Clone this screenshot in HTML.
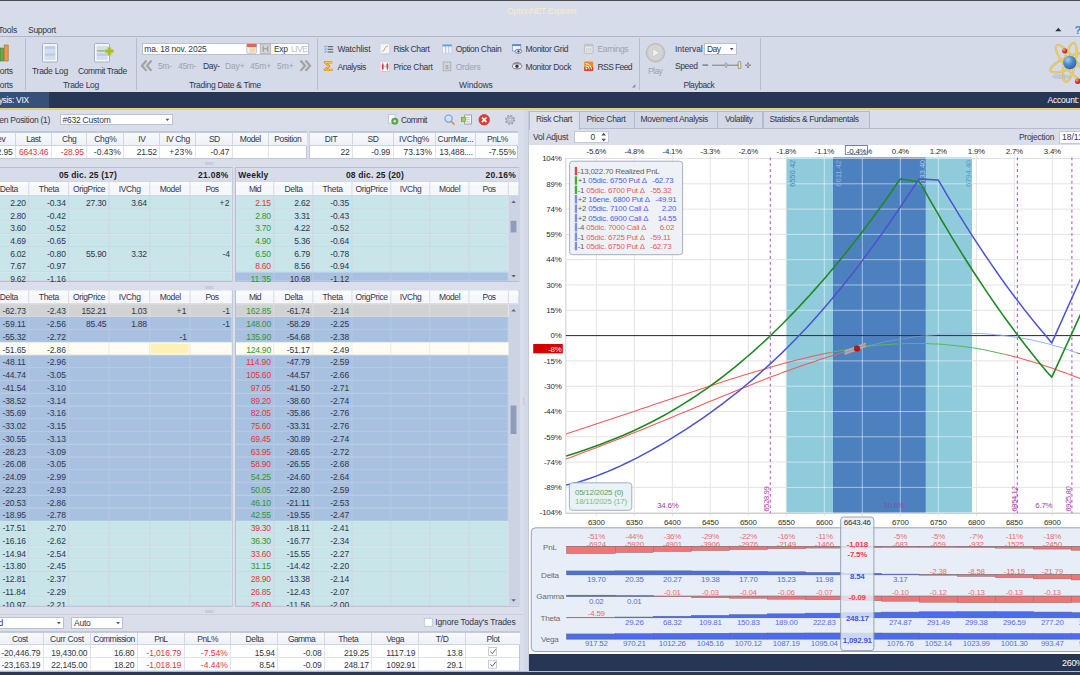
<!DOCTYPE html>
<html><head><meta charset="utf-8"><title>OptionNET Explorer</title>
<style>
html,body{margin:0;padding:0;}
body{width:1080px;height:675px;overflow:hidden;position:relative;background:#d6dbe9;font-family:"Liberation Sans",sans-serif;}
.r{position:absolute;box-sizing:border-box;}
.t{position:absolute;white-space:nowrap;font-size:8.5px;line-height:12px;letter-spacing:-0.2px;color:#323649;}
.g{color:#9aa3b5;}
.w{color:#fff;}
.red{color:#e4343f;}
.grn{color:#30962f;}
.b{font-weight:bold;color:#1d1d28;}
svg{position:absolute;left:0;top:0;}
svg text{font-family:"Liberation Sans",sans-serif;letter-spacing:-0.22px;}
</style></head><body>

<div class="r" style="left:0.00px;top:0.00px;width:1080.00px;height:1.00px;background:#4e4e52;"></div>
<div class="r" style="left:0.00px;top:1.00px;width:1080.00px;height:35.50px;background:#d7dcea;"></div>
<div class="t " style="top:5.00px;letter-spacing:-0.342px;left:507.00px;color:#f6ead2;">OptionNET Explorer</div>
<div class="t " style="top:24.00px;letter-spacing:-0.219px;left:-1.80px;">Tools</div>
<div class="t " style="top:24.00px;letter-spacing:-0.289px;left:28.00px;">Support</div>
<svg width="1080" height="40" viewBox="0 0 1080 40"><path d="M1055.3 31.2 L1058.3 27.8 L1061.3 31.2Z" fill="#26304a"/><text x="1074.5" y="33.5" font-size="11" font-weight="bold" fill="#3b8fd8">?</text></svg>
<div class="r" style="left:0.00px;top:36.00px;width:1080.00px;height:1.00px;background:#aeb6c8;"></div>
<div class="r" style="left:0.00px;top:37.00px;width:1080.00px;height:54.70px;background:#d5dae8;"></div>
<div class="r" style="left:25.00px;top:38.00px;width:1.00px;height:52.00px;background:#b4bccd;"></div>
<div class="r" style="left:136.00px;top:38.00px;width:1.00px;height:52.00px;background:#b4bccd;"></div>
<div class="r" style="left:317.00px;top:38.00px;width:1.00px;height:52.00px;background:#b4bccd;"></div>
<div class="r" style="left:639.00px;top:38.00px;width:1.00px;height:52.00px;background:#b4bccd;"></div>
<div class="r" style="left:760.00px;top:38.00px;width:1.00px;height:52.00px;background:#b4bccd;"></div>
<div class="t " style="top:64.80px;letter-spacing:-0.288px;left:-15.00px;">Reports</div>
<div class="t " style="top:78.70px;letter-spacing:-0.288px;left:-15.00px;">Reports</div>
<div class="t " style="top:64.80px;letter-spacing:-0.270px;left:32.00px;">Trade Log</div>
<div class="t " style="top:64.80px;letter-spacing:-0.386px;left:78.00px;">Commit Trade</div>
<div class="t " style="top:78.70px;letter-spacing:-0.270px;left:63.00px;">Trade Log</div>
<div class="r" style="left:142.20px;top:42.60px;width:167.20px;height:12.80px;background:#fff;border:1px solid #b9c1d2;"></div>
<div class="t " style="top:43.00px;letter-spacing:-0.175px;left:144.30px;">ma. 18 nov. 2025</div>
<div class="t " style="top:43.00px;letter-spacing:-0.382px;left:274.00px;">Exp</div>
<div class="t g" style="top:43.00px;letter-spacing:-0.600px;left:291.00px;color:#b9c1cf;">LIVE</div>
<div class="t g" style="top:60.00px;letter-spacing:-0.380px;left:158.00px;">5m-</div>
<div class="t g" style="top:60.00px;letter-spacing:-0.342px;left:178.00px;">45m-</div>
<div class="t " style="top:60.00px;letter-spacing:-0.362px;left:203.00px;">Day-</div>
<div class="t g" style="top:60.00px;letter-spacing:-0.145px;left:225.00px;">Day+</div>
<div class="t g" style="top:60.00px;letter-spacing:-0.125px;left:250.00px;">45m+</div>
<div class="t g" style="top:60.00px;letter-spacing:-0.091px;left:277.00px;">5m+</div>
<div class="t " style="top:78.70px;letter-spacing:-0.297px;left:189.00px;">Trading Date &amp; Time</div>
<div class="t " style="top:43.00px;letter-spacing:-0.129px;left:337.40px;">Watchlist</div>
<div class="t " style="top:60.50px;letter-spacing:-0.394px;left:337.40px;">Analysis</div>
<div class="t " style="top:43.00px;letter-spacing:-0.367px;left:393.50px;">Risk Chart</div>
<div class="t " style="top:60.50px;letter-spacing:-0.319px;left:393.50px;">Price Chart</div>
<div class="t " style="top:43.00px;letter-spacing:-0.322px;left:455.70px;">Option Chain</div>
<div class="t g" style="top:60.50px;letter-spacing:-0.205px;left:455.70px;">Orders</div>
<div class="t " style="top:43.00px;letter-spacing:-0.334px;left:525.50px;">Monitor Grid</div>
<div class="t " style="top:60.50px;letter-spacing:-0.360px;left:525.50px;">Monitor Dock</div>
<div class="t g" style="top:43.00px;letter-spacing:-0.350px;left:597.50px;">Earnings</div>
<div class="t " style="top:60.50px;letter-spacing:-0.589px;left:597.50px;">RSS Feed</div>
<div class="t " style="top:78.70px;letter-spacing:-0.105px;left:459.00px;">Windows</div>
<div class="t g" style="top:64.50px;letter-spacing:-0.571px;left:648.00px;">Play</div>
<div class="t " style="top:43.00px;letter-spacing:-0.016px;left:675.00px;">Interval</div>
<div class="t " style="top:59.50px;letter-spacing:-0.416px;left:675.00px;">Speed</div>
<div class="t " style="top:78.70px;letter-spacing:-0.468px;left:683.50px;">Playback</div>
<div class="r" style="left:704.00px;top:42.60px;width:33.20px;height:12.90px;background:#fff;border:1px solid #b9c1d2;"></div>
<div class="t " style="top:43.00px;letter-spacing:-0.539px;left:707.00px;">Day</div>
<svg width="1080" height="92" viewBox="0 0 1080 92">
<!-- reports icon (cut) -->
<rect x="0" y="48" width="3.5" height="13" fill="#6aa84f" stroke="#3f7a2c" stroke-width=".6"/>
<rect x="4.2" y="45" width="4" height="16" fill="#e79a4a" stroke="#b06a22" stroke-width=".6"/>
<!-- trade log -->
<rect x="42.5" y="43.5" width="15" height="18.5" rx="1.2" fill="#f4f7fc" stroke="#9fb1cf" stroke-width="1"/><rect x="44.6" y="45.8" width="10.8" height="14" fill="#d3ddf0"/>
<rect x="44.8" y="46.5" width="10.4" height="2.3" fill="#bccbe5"/><rect x="44.8" y="50" width="10.4" height="2.3" fill="#d3ddf0"/>
<rect x="44.8" y="53.5" width="10.4" height="2.3" fill="#bccbe5"/><rect x="44.8" y="57" width="10.4" height="2.3" fill="#d3ddf0"/>
<!-- commit trade -->
<rect x="94.5" y="43.5" width="15" height="18.5" rx="1.2" fill="#f4f7fc" stroke="#9fb1cf" stroke-width="1"/><rect x="96.6" y="45.8" width="10.8" height="14" fill="#d9e2f2"/>
<rect x="96.8" y="47" width="10.4" height="2.3" fill="#d3ddf0"/><rect x="96.8" y="50.3" width="14" height="1.2" fill="#8fb04a"/>
<rect x="96.8" y="53.5" width="10.4" height="2.3" fill="#bccbe5"/><rect x="96.8" y="57" width="10.4" height="2.3" fill="#d3ddf0"/>
<path d="M107.8 47.2h3v2.6h2.7v2.9h-2.7v2.7h-3v-2.7h-2.6v-2.9h2.6z" fill="#8fc040" stroke="#e3c43a" stroke-width=".9"/>
<!-- date row -->
<rect x="246.8" y="44" width="9.8" height="9.4" rx="1" fill="#e9eef8" stroke="#a9b8d4" stroke-width=".7"/>
<rect x="246.8" y="44" width="9.8" height="3" fill="#e0665c"/>
<rect x="249.5" y="48.3" width="6" height="4" fill="#f3d9a0"/>
<rect x="260.2" y="44" width="10.6" height="9.6" fill="#d4d4d2" stroke="#a5a7a6" stroke-width=".7"/>
<path d="M263.2 45.8v6M267.8 45.8v6M263.2 48.8h4.6" stroke="#8b8d8c" stroke-width=".9" fill="none"/>
<path d="M146.5 60.5l-4.5 5.2 4.5 5.2M151.5 60.5l-4.5 5.2 4.5 5.2" stroke="#a3a3a1" stroke-width="2.2" fill="none"/>
<path d="M300.5 60.5l4.5 5.2-4.5 5.2M305.5 60.5l4.5 5.2-4.5 5.2" stroke="#a3a3a1" stroke-width="2.2" fill="none"/>
<!-- watchlist -->
<path d="M327.6 46.7h5.6M327.6 49.3h5.6M327.6 52h5.6" stroke="#3f4458" stroke-width=".9"/>
<path d="M324.4 46.3l.8.9 1.200-1.700M324.4 48.900l.8.9 1.200-1.700M324.4 51.600l.8.9 1.200-1.700" stroke="#4f86d6" stroke-width=".8" fill="none"/>
<!-- analysis sigma -->
<path d="M332.3 62.4h-7.3l4 3.700-4.2 3.800h7.800" stroke="#e28a22" stroke-width="2.300" fill="none" stroke-linejoin="round"/><path d="M332.3 62.400h-7.300l4 3.700-4.200 3.800h7.800" stroke="#f7d65a" stroke-width=".9" fill="none" stroke-linejoin="round"/>
<!-- risk chart -->
<rect x="381" y="44.700" width="9.200" height="9.600" rx="1" fill="#b4c0d8"/><rect x="380.3" y="44" width="9.2" height="9.6" rx=".8" fill="#f6f7f9" stroke="#d0d4de" stroke-width=".5"/>
<path d="M381.800 51.300c1.500.4 2.200-.8 2.900-2.400s1.500-3 3.300-2.700" stroke="#c19a5c" stroke-width=".9" fill="none"/>
<!-- price chart -->
<rect x="381" y="62.600" width="9.200" height="9.200" rx="1" fill="#b4c0d8"/><rect x="380.3" y="61.900" width="9.2" height="9.200" rx=".8" fill="#f9fafc" stroke="#d0d4de" stroke-width=".5"/>
<path d="M382.700 62.800v7.500M387.400 62.800v7.500" stroke="#d8322e" stroke-width=".7"/><path d="M383.600 66.300h2.900" stroke="#8a8f9c" stroke-width=".6"/>
<rect x="381.800" y="64.200" width="1.800" height="4.800" rx=".6" fill="#e03a36"/><rect x="386.500" y="63.800" width="1.800" height="5" rx=".6" fill="#e03a36"/>
<!-- option chain -->
<rect x="442.6" y="44.6" width="9.2" height="8.6" fill="#f2f5fb" stroke="#c3cbe0" stroke-width=".7"/>
<rect x="442.6" y="44.6" width="9.2" height="1.800" fill="#5a9fdc"/>
<path d="M445.7 46v7M448.8 46v7" stroke="#a8b8d8" stroke-width=".8"/>
<!-- orders -->
<rect x="443.2" y="62" width="7.6" height="8.800" fill="#d3d4d6" stroke="#a9aaad" stroke-width=".8"/>
<text x="445.3" y="69" font-size="6" fill="#97989b">$</text>
<!-- monitor grid -->
<rect x="512.4" y="44.4" width="8.4" height="6.600" fill="#eef3fb" stroke="#7d9bd0" stroke-width=".8"/>
<rect x="512.4" y="44.4" width="8.4" height="1.600" fill="#4f86d6"/>
<ellipse cx="518.5" cy="51.300" rx="3.300" ry="2" fill="#e8ecf4" stroke="#4d5878" stroke-width=".7"/><circle cx="518.5" cy="51.300" r="1.100" fill="#27304a"/>
<!-- monitor dock -->
<ellipse cx="517" cy="66.300" rx="4.600" ry="2.600" fill="#eef0f6" stroke="#5a6078" stroke-width=".8"/><circle cx="517" cy="66.300" r="1.700" fill="#3b3048"/>
<path d="M512.6 64.2c2.500-2.200 6.300-2.200 8.800 0" stroke="#8d6a4a" stroke-width=".8" fill="none"/>
<!-- earnings -->
<rect x="584.4" y="44.300" width="8.600" height="9" rx=".8" fill="#e6e7e9" stroke="#b3b5ba" stroke-width=".8"/>
<rect x="584.4" y="44.300" width="8.600" height="2.200" fill="#c2c4c8"/>
<path d="M586.6 48v4M588.7 48v4M590.800 48v4" stroke="#c0c2c6" stroke-width=".7"/>
<!-- rss -->
<rect x="584.2" y="61.600" width="9" height="9.200" rx="1" fill="#f08a24"/>
<rect x="584.2" y="67.300" width="9" height="3.500" fill="#d9342f"/>
<circle cx="586.4" cy="68.600" r="1" fill="#fff"/>
<path d="M585.6 65.800a3.600 3.600 0 0 1 3.600 3.600M585.600 63.600a5.800 5.800 0 0 1 5.800 5.800" stroke="#fff" stroke-width="1" fill="none"/>
<path d="M635.300 84.200v3.300h-3.300z" fill="#7d869c"/>
<!-- play -->
<circle cx="655.500" cy="52.800" r="9.300" fill="#c9c9c7" stroke="#b4b5b6" stroke-width=".8"/>
<circle cx="655.500" cy="52.300" r="7.600" fill="#d4d4d2"/>
<path d="M652.700 48.700l6.600 4.100-6.600 4.100z" fill="#f1f1f0" stroke="#b9b9b7" stroke-width=".5"/>
<!-- day arrow -->
<path d="M729.800 48l1.900 2.200 1.900-2.200z" fill="#4a4f63"/>
<!-- speed slider -->
<rect x="702.300" y="64.300" width="6" height="1.700" rx=".8" fill="#8d8f94"/>
<rect x="712" y="64.500" width="28" height="1.500" fill="#9a9ca2"/>
<rect x="725.300" y="62.700" width="1.600" height="5" rx=".8" fill="#d7d8da" stroke="#7f8186" stroke-width=".5"/>
<rect x="738.200" y="61.600" width="2.600" height="7" rx=".6" fill="#f7e7a0" stroke="#6d6a55" stroke-width=".6"/>
<path d="M745.300 65.200h5.400M748 62.500v5.400" stroke="#77797f" stroke-width="1.600"/>
<path d="M746.500 65.200h3M748 63.700v3" stroke="#e4e5e8" stroke-width=".5"/>
<!-- atom logo -->
<defs><radialGradient id="sph" cx=".35" cy=".3" r=".8"><stop offset="0" stop-color="#a9cdf2"/><stop offset=".45" stop-color="#4f8bd2"/><stop offset="1" stop-color="#2d5ea8"/></radialGradient>
<radialGradient id="rb" cx=".35" cy=".3" r=".8"><stop offset="0" stop-color="#f5a090"/><stop offset=".5" stop-color="#dc3a2c"/><stop offset="1" stop-color="#a81c14"/></radialGradient></defs>
<ellipse cx="1061.5" cy="76.6" rx="10" ry="2.4" fill="#bcc2d0" opacity=".8"/>
<g fill="none" stroke="#c9982e" stroke-width="2.1" opacity=".55">
<ellipse cx="1069.8" cy="62.5" rx="21" ry="6" transform="rotate(-23 1069.8 62.5)"/>
<ellipse cx="1069.8" cy="62.5" rx="21.6" ry="6" transform="rotate(52 1069.8 62.5)"/>
<ellipse cx="1069.8" cy="62.5" rx="19.8" ry="5.6" transform="rotate(102 1069.8 62.5)"/></g>
<g fill="none" stroke="#f0d055" stroke-width="1.3">
<ellipse cx="1069.8" cy="62.5" rx="21" ry="6" transform="rotate(-23 1069.8 62.5)"/>
<ellipse cx="1069.8" cy="62.5" rx="21.6" ry="6" transform="rotate(52 1069.8 62.5)"/>
<ellipse cx="1069.8" cy="62.5" rx="19.8" ry="5.6" transform="rotate(102 1069.8 62.5)"/></g>
<circle cx="1069.8" cy="62.5" r="6.7" fill="url(#sph)"/>
<circle cx="1064.7" cy="50.8" r="2.6" fill="url(#rb)"/><circle cx="1077.7" cy="81.2" r="2.8" fill="url(#rb)"/>
</svg>
<div class="r" style="left:0.00px;top:91.70px;width:1080.00px;height:16.00px;background:#283655;"></div>
<div class="r" style="left:0.00px;top:91.70px;width:48.50px;height:16.00px;background:#355079;"></div>
<div class="r" style="left:0.00px;top:107.60px;width:1080.00px;height:1.00px;background:#e4d57c;"></div>
<div class="r" style="left:0.00px;top:108.60px;width:1080.00px;height:1.00px;background:#c4cad8;"></div>
<div class="t w" style="top:94.30px;letter-spacing:-0.333px;left:-17.00px;">Analysis: VIX</div>
<div class="t w" style="top:94.30px;letter-spacing:-0.197px;left:1047.50px;">Account:</div>
<div class="r" style="left:0.00px;top:109.60px;width:1080.00px;height:566.00px;background:#d9deea;"></div>
<div class="t " style="top:113.80px;letter-spacing:-0.273px;left:-11.50px;">Open Position (1)</div>
<div class="r" style="left:59.70px;top:114.30px;width:113.60px;height:11.20px;background:#fff;border:1px solid #b9c1d2;"></div>
<div class="t " style="top:113.80px;letter-spacing:-0.232px;left:62.50px;">#632 Custom</div>
<svg width="540" height="675" viewBox="0 0 540 675"><path d="M165.6 118.8l1.900 2.200 1.900-2.200z" fill="#4a4f63"/></svg>
<div class="r" style="left:-21.50px;top:131.00px;width:328.20px;height:28.00px;background:#fff;border:1px solid #c0c7d7;"></div>
<div class="r" style="left:-21.50px;top:132.00px;width:328.20px;height:13.70px;background:linear-gradient(#f8f9fc,#eef1f7);border-top:1px solid #c5cbda;border-bottom:1px solid #cfd4e2;"></div>
<div class="t " style="top:133.15px;letter-spacing:-0.245px;left:-152.78px;width:300px;text-align:center;">Prev</div>
<div class="r" style="left:14.70px;top:133.00px;width:1.00px;height:11.70px;background:#d3d7e4;"></div>
<div class="t " style="top:133.15px;letter-spacing:-0.454px;left:-116.67px;width:300px;text-align:center;">Last</div>
<div class="r" style="left:50.50px;top:133.00px;width:1.00px;height:11.70px;background:#d3d7e4;"></div>
<div class="t " style="top:133.15px;letter-spacing:-0.448px;left:-80.88px;width:300px;text-align:center;">Chg</div>
<div class="r" style="left:86.30px;top:133.00px;width:1.00px;height:11.70px;background:#d3d7e4;"></div>
<div class="t " style="top:133.15px;letter-spacing:-0.163px;left:-44.62px;width:300px;text-align:center;">Chg%</div>
<div class="r" style="left:123.30px;top:133.00px;width:1.00px;height:11.70px;background:#d3d7e4;"></div>
<div class="t " style="top:133.15px;letter-spacing:-0.266px;left:-8.12px;width:300px;text-align:center;">IV</div>
<div class="r" style="left:159.20px;top:133.00px;width:1.00px;height:11.70px;background:#d3d7e4;"></div>
<div class="t " style="top:133.15px;letter-spacing:-0.331px;left:27.92px;width:300px;text-align:center;">IV Chg</div>
<div class="r" style="left:195.30px;top:133.00px;width:1.00px;height:11.70px;background:#d3d7e4;"></div>
<div class="t " style="top:133.15px;letter-spacing:-0.600px;left:64.30px;width:300px;text-align:center;">SD</div>
<div class="r" style="left:231.70px;top:133.00px;width:1.00px;height:11.70px;background:#d3d7e4;"></div>
<div class="t " style="top:133.15px;letter-spacing:-0.430px;left:100.32px;width:300px;text-align:center;">Model</div>
<div class="r" style="left:267.50px;top:133.00px;width:1.00px;height:11.70px;background:#d3d7e4;"></div>
<div class="t " style="top:133.15px;letter-spacing:-0.405px;left:137.80px;width:300px;text-align:center;">Position</div>
<div class="t " style="top:146.40px;letter-spacing:-0.211px;left:-287.59px;width:300px;text-align:right;">6672.95</div>
<div class="r" style="left:14.70px;top:146.00px;width:1.00px;height:12.00px;background:#dfe3ec;"></div>
<div class="t red" style="top:146.40px;letter-spacing:-0.211px;left:-251.79px;width:300px;text-align:right;">6643.46</div>
<div class="r" style="left:50.50px;top:146.00px;width:1.00px;height:12.00px;background:#dfe3ec;"></div>
<div class="t red" style="top:146.40px;letter-spacing:-0.142px;left:-216.06px;width:300px;text-align:right;">-28.95</div>
<div class="r" style="left:86.30px;top:146.00px;width:1.00px;height:12.00px;background:#dfe3ec;"></div>
<div class="t " style="top:146.40px;letter-spacing:0.011px;left:-179.21px;width:300px;text-align:right;">-0.43%</div>
<div class="r" style="left:123.30px;top:146.00px;width:1.00px;height:12.00px;background:#dfe3ec;"></div>
<div class="t " style="top:146.40px;letter-spacing:-0.204px;left:-143.10px;width:300px;text-align:right;">21.52</div>
<div class="r" style="left:159.20px;top:146.00px;width:1.00px;height:12.00px;background:#dfe3ec;"></div>
<div class="t " style="top:146.40px;letter-spacing:0.300px;left:-107.50px;width:300px;text-align:right;">+23%</div>
<div class="r" style="left:195.30px;top:146.00px;width:1.00px;height:12.00px;background:#dfe3ec;"></div>
<div class="t " style="top:146.40px;letter-spacing:-0.125px;left:-70.68px;width:300px;text-align:right;">-0.47</div>
<div class="r" style="left:231.70px;top:146.00px;width:1.00px;height:12.00px;background:#dfe3ec;"></div>
<div class="r" style="left:267.50px;top:146.00px;width:1.00px;height:12.00px;background:#dfe3ec;"></div>
<div class="r" style="left:309.20px;top:131.00px;width:209.10px;height:28.00px;background:#fff;border:1px solid #c0c7d7;"></div>
<div class="r" style="left:309.20px;top:132.00px;width:209.10px;height:13.70px;background:linear-gradient(#f8f9fc,#eef1f7);border-top:1px solid #c5cbda;border-bottom:1px solid #cfd4e2;"></div>
<div class="r" style="left:309.20px;top:133.00px;width:1.00px;height:11.70px;background:#d3d7e4;"></div>
<div class="t " style="top:133.15px;letter-spacing:-0.314px;left:181.11px;width:300px;text-align:center;">DIT</div>
<div class="r" style="left:351.70px;top:133.00px;width:1.00px;height:11.70px;background:#d3d7e4;"></div>
<div class="t " style="top:133.15px;letter-spacing:-0.600px;left:222.90px;width:300px;text-align:center;">SD</div>
<div class="r" style="left:392.50px;top:133.00px;width:1.00px;height:11.70px;background:#d3d7e4;"></div>
<div class="t " style="top:133.15px;letter-spacing:-0.197px;left:264.10px;width:300px;text-align:center;">IVChg%</div>
<div class="r" style="left:434.50px;top:133.00px;width:1.00px;height:11.70px;background:#d3d7e4;"></div>
<div class="t " style="top:133.15px;letter-spacing:-0.178px;left:305.49px;width:300px;text-align:center;">CurrMar...</div>
<div class="r" style="left:475.30px;top:133.00px;width:1.00px;height:11.70px;background:#d3d7e4;"></div>
<div class="t " style="top:133.15px;letter-spacing:-0.421px;left:347.51px;width:300px;text-align:center;">PnL%</div>
<div class="t " style="top:146.40px;letter-spacing:-0.227px;left:49.43px;width:300px;text-align:right;">22</div>
<div class="r" style="left:351.70px;top:146.00px;width:1.00px;height:12.00px;background:#dfe3ec;"></div>
<div class="t " style="top:146.40px;letter-spacing:-0.125px;left:90.12px;width:300px;text-align:right;">-0.99</div>
<div class="r" style="left:392.50px;top:146.00px;width:1.00px;height:12.00px;background:#dfe3ec;"></div>
<div class="t " style="top:146.40px;letter-spacing:-0.055px;left:132.05px;width:300px;text-align:right;">73.13%</div>
<div class="r" style="left:434.50px;top:146.00px;width:1.00px;height:12.00px;background:#dfe3ec;"></div>
<div class="t " style="top:146.40px;letter-spacing:-0.169px;left:172.97px;width:300px;text-align:right;">13,488....</div>
<div class="r" style="left:475.30px;top:146.00px;width:1.00px;height:12.00px;background:#dfe3ec;"></div>
<div class="t " style="top:146.40px;letter-spacing:0.011px;left:215.79px;width:300px;text-align:right;">-7.55%</div>
<div class="t " style="top:113.80px;letter-spacing:-0.600px;left:401.00px;">Commit</div>
<svg width="540" height="675" viewBox="0 0 540 675">
<rect x="388.6" y="114.600" width="6.600" height="8.600" fill="#f7f8fb" stroke="#b4bdd0" stroke-width=".7"/>
<circle cx="394.800" cy="121.200" r="3.200" fill="#5fae4a" stroke="#3f8a32" stroke-width=".5"/><circle cx="394.800" cy="121.200" r="1.200" fill="#d9efd0"/>
<circle cx="448.600" cy="118.600" r="3.600" fill="#cfe2f6" stroke="#6f9bd2" stroke-width="1.100"/>
<path d="M451.200 121.400l3.300 3.300" stroke="#d39a4a" stroke-width="1.700"/>
<rect x="464.600" y="115" width="6.800" height="9" fill="#f4f6fb" stroke="#8b93a8" stroke-width=".8"/>
<path d="M466 117.500h4M466 119.600h4M466 121.700h4" stroke="#aab3c8" stroke-width=".7"/>
<rect x="461.400" y="117.200" width="4.200" height="4.200" fill="#a9cf4a" stroke="#6b8f2a" stroke-width=".6"/>
<circle cx="484.200" cy="119.800" r="5.300" fill="#dc3a32" stroke="#c02a24" stroke-width=".6"/>
<path d="M481.900 117.500l4.600 4.600M486.500 117.500l-4.600 4.600" stroke="#fff" stroke-width="1.700"/>
<circle cx="510" cy="119.800" r="4.300" fill="none" stroke="#98a1b6" stroke-width="1.700" stroke-dasharray="1.700 1.680"/>
<circle cx="510" cy="119.800" r="3.500" fill="#c6ccda" stroke="#8f98ae" stroke-width=".7"/>
<circle cx="510" cy="119.800" r="1.500" fill="#e3e7f0" stroke="#8f98ae" stroke-width=".6"/>
<text x="205" y="165" font-size="4.500" fill="#aab2c6" letter-spacing="-.3">xxxx</text>
<text x="205" y="288.700" font-size="4.500" fill="#aab2c6" letter-spacing="-.3">xxxx</text>
<text x="205" y="613.300" font-size="4.500" fill="#aab2c6" letter-spacing="-.3">xxxx</text>
</svg>
<div class="r" style="left:0;top:167px;width:524px;height:115px;overflow:hidden;"><div class="r" style="left:0;top:-167px;width:524px;height:675px;">
<svg width="540" height="675" viewBox="0 0 540 675"><rect x="-12.00" y="167.00" width="244.60" height="115.00" fill="#b7bfd1"/><rect x="-12.00" y="168.00" width="243.60" height="113.00" fill="#fff"/><rect x="235.00" y="167.00" width="284.30" height="115.00" fill="#b7bfd1"/><rect x="236.00" y="168.00" width="282.30" height="113.00" fill="#fff"/><rect x="-12.00" y="168.00" width="243.60" height="13.40" fill="#d7dcea"/><rect x="236.00" y="168.00" width="282.30" height="13.40" fill="#d7dcea"/><rect x="0.00" y="181.40" width="231.60" height="14.60" fill="#f5f7fb"/><rect x="0.00" y="181.40" width="231.60" height="4.00" fill="#fafbfd"/><rect x="0.00" y="195.10" width="231.60" height="0.90" fill="#cdd3e1"/><rect x="0.00" y="180.90" width="231.60" height="0.90" fill="#c9cfde"/><rect x="28.30" y="181.90" width="0.90" height="13.60" fill="#d3d8e5"/><rect x="68.20" y="181.90" width="0.90" height="13.60" fill="#d3d8e5"/><rect x="108.60" y="181.90" width="0.90" height="13.60" fill="#d3d8e5"/><rect x="149.30" y="181.90" width="0.90" height="13.60" fill="#d3d8e5"/><rect x="189.60" y="181.90" width="0.90" height="13.60" fill="#d3d8e5"/><rect x="236.00" y="181.40" width="282.30" height="14.60" fill="#f5f7fb"/><rect x="236.00" y="181.40" width="282.30" height="4.00" fill="#fafbfd"/><rect x="236.00" y="195.10" width="282.30" height="0.90" fill="#cdd3e1"/><rect x="236.00" y="180.90" width="282.30" height="0.90" fill="#c9cfde"/><rect x="273.30" y="181.90" width="0.90" height="13.60" fill="#d3d8e5"/><rect x="312.40" y="181.90" width="0.90" height="13.60" fill="#d3d8e5"/><rect x="351.50" y="181.90" width="0.90" height="13.60" fill="#d3d8e5"/><rect x="390.40" y="181.90" width="0.90" height="13.60" fill="#d3d8e5"/><rect x="429.30" y="181.90" width="0.90" height="13.60" fill="#d3d8e5"/><rect x="468.50" y="181.90" width="0.90" height="13.60" fill="#d3d8e5"/><rect x="507.90" y="181.90" width="0.90" height="13.60" fill="#d3d8e5"/><rect x="508.80" y="196.00" width="9.50" height="85.00" fill="#ccd3e3"/><rect x="0.00" y="196.00" width="231.60" height="12.72" fill="#c8e5ea"/><rect x="0.00" y="207.87" width="231.60" height="0.85" fill="#d2d3e3"/><rect x="28.30" y="196.00" width="0.90" height="12.72" fill="#d2d3e3"/><rect x="68.20" y="196.00" width="0.90" height="12.72" fill="#d2d3e3"/><rect x="108.60" y="196.00" width="0.90" height="12.72" fill="#d2d3e3"/><rect x="149.30" y="196.00" width="0.90" height="12.72" fill="#d2d3e3"/><rect x="189.60" y="196.00" width="0.90" height="12.72" fill="#d2d3e3"/><rect x="236.00" y="196.00" width="271.90" height="12.72" fill="#c8e5ea"/><rect x="236.00" y="207.87" width="271.90" height="0.85" fill="#d2d3e3"/><rect x="273.30" y="196.00" width="0.90" height="12.72" fill="#d2d3e3"/><rect x="312.40" y="196.00" width="0.90" height="12.72" fill="#d2d3e3"/><rect x="351.50" y="196.00" width="0.90" height="12.72" fill="#d2d3e3"/><rect x="390.40" y="196.00" width="0.90" height="12.72" fill="#d2d3e3"/><rect x="429.30" y="196.00" width="0.90" height="12.72" fill="#d2d3e3"/><rect x="468.50" y="196.00" width="0.90" height="12.72" fill="#d2d3e3"/><rect x="507.90" y="196.00" width="0.90" height="12.72" fill="#d2d3e3"/><rect x="0.00" y="208.72" width="231.60" height="12.72" fill="#c8e5ea"/><rect x="0.00" y="220.59" width="231.60" height="0.85" fill="#d2d3e3"/><rect x="28.30" y="208.72" width="0.90" height="12.72" fill="#d2d3e3"/><rect x="68.20" y="208.72" width="0.90" height="12.72" fill="#d2d3e3"/><rect x="108.60" y="208.72" width="0.90" height="12.72" fill="#d2d3e3"/><rect x="149.30" y="208.72" width="0.90" height="12.72" fill="#d2d3e3"/><rect x="189.60" y="208.72" width="0.90" height="12.72" fill="#d2d3e3"/><rect x="236.00" y="208.72" width="271.90" height="12.72" fill="#c8e5ea"/><rect x="236.00" y="220.59" width="271.90" height="0.85" fill="#d2d3e3"/><rect x="273.30" y="208.72" width="0.90" height="12.72" fill="#d2d3e3"/><rect x="312.40" y="208.72" width="0.90" height="12.72" fill="#d2d3e3"/><rect x="351.50" y="208.72" width="0.90" height="12.72" fill="#d2d3e3"/><rect x="390.40" y="208.72" width="0.90" height="12.72" fill="#d2d3e3"/><rect x="429.30" y="208.72" width="0.90" height="12.72" fill="#d2d3e3"/><rect x="468.50" y="208.72" width="0.90" height="12.72" fill="#d2d3e3"/><rect x="507.90" y="208.72" width="0.90" height="12.72" fill="#d2d3e3"/><rect x="0.00" y="221.44" width="231.60" height="12.72" fill="#c8e5ea"/><rect x="0.00" y="233.31" width="231.60" height="0.85" fill="#d2d3e3"/><rect x="28.30" y="221.44" width="0.90" height="12.72" fill="#d2d3e3"/><rect x="68.20" y="221.44" width="0.90" height="12.72" fill="#d2d3e3"/><rect x="108.60" y="221.44" width="0.90" height="12.72" fill="#d2d3e3"/><rect x="149.30" y="221.44" width="0.90" height="12.72" fill="#d2d3e3"/><rect x="189.60" y="221.44" width="0.90" height="12.72" fill="#d2d3e3"/><rect x="236.00" y="221.44" width="271.90" height="12.72" fill="#c8e5ea"/><rect x="236.00" y="233.31" width="271.90" height="0.85" fill="#d2d3e3"/><rect x="273.30" y="221.44" width="0.90" height="12.72" fill="#d2d3e3"/><rect x="312.40" y="221.44" width="0.90" height="12.72" fill="#d2d3e3"/><rect x="351.50" y="221.44" width="0.90" height="12.72" fill="#d2d3e3"/><rect x="390.40" y="221.44" width="0.90" height="12.72" fill="#d2d3e3"/><rect x="429.30" y="221.44" width="0.90" height="12.72" fill="#d2d3e3"/><rect x="468.50" y="221.44" width="0.90" height="12.72" fill="#d2d3e3"/><rect x="507.90" y="221.44" width="0.90" height="12.72" fill="#d2d3e3"/><rect x="0.00" y="234.16" width="231.60" height="12.72" fill="#c8e5ea"/><rect x="0.00" y="246.03" width="231.60" height="0.85" fill="#d2d3e3"/><rect x="28.30" y="234.16" width="0.90" height="12.72" fill="#d2d3e3"/><rect x="68.20" y="234.16" width="0.90" height="12.72" fill="#d2d3e3"/><rect x="108.60" y="234.16" width="0.90" height="12.72" fill="#d2d3e3"/><rect x="149.30" y="234.16" width="0.90" height="12.72" fill="#d2d3e3"/><rect x="189.60" y="234.16" width="0.90" height="12.72" fill="#d2d3e3"/><rect x="236.00" y="234.16" width="271.90" height="12.72" fill="#c8e5ea"/><rect x="236.00" y="246.03" width="271.90" height="0.85" fill="#d2d3e3"/><rect x="273.30" y="234.16" width="0.90" height="12.72" fill="#d2d3e3"/><rect x="312.40" y="234.16" width="0.90" height="12.72" fill="#d2d3e3"/><rect x="351.50" y="234.16" width="0.90" height="12.72" fill="#d2d3e3"/><rect x="390.40" y="234.16" width="0.90" height="12.72" fill="#d2d3e3"/><rect x="429.30" y="234.16" width="0.90" height="12.72" fill="#d2d3e3"/><rect x="468.50" y="234.16" width="0.90" height="12.72" fill="#d2d3e3"/><rect x="507.90" y="234.16" width="0.90" height="12.72" fill="#d2d3e3"/><rect x="0.00" y="246.88" width="231.60" height="12.72" fill="#c8e5ea"/><rect x="0.00" y="258.75" width="231.60" height="0.85" fill="#d2d3e3"/><rect x="28.30" y="246.88" width="0.90" height="12.72" fill="#d2d3e3"/><rect x="68.20" y="246.88" width="0.90" height="12.72" fill="#d2d3e3"/><rect x="108.60" y="246.88" width="0.90" height="12.72" fill="#d2d3e3"/><rect x="149.30" y="246.88" width="0.90" height="12.72" fill="#d2d3e3"/><rect x="189.60" y="246.88" width="0.90" height="12.72" fill="#d2d3e3"/><rect x="236.00" y="246.88" width="271.90" height="12.72" fill="#c8e5ea"/><rect x="236.00" y="258.75" width="271.90" height="0.85" fill="#d2d3e3"/><rect x="273.30" y="246.88" width="0.90" height="12.72" fill="#d2d3e3"/><rect x="312.40" y="246.88" width="0.90" height="12.72" fill="#d2d3e3"/><rect x="351.50" y="246.88" width="0.90" height="12.72" fill="#d2d3e3"/><rect x="390.40" y="246.88" width="0.90" height="12.72" fill="#d2d3e3"/><rect x="429.30" y="246.88" width="0.90" height="12.72" fill="#d2d3e3"/><rect x="468.50" y="246.88" width="0.90" height="12.72" fill="#d2d3e3"/><rect x="507.90" y="246.88" width="0.90" height="12.72" fill="#d2d3e3"/><rect x="0.00" y="259.60" width="231.60" height="12.72" fill="#c8e5ea"/><rect x="0.00" y="271.47" width="231.60" height="0.85" fill="#d2d3e3"/><rect x="28.30" y="259.60" width="0.90" height="12.72" fill="#d2d3e3"/><rect x="68.20" y="259.60" width="0.90" height="12.72" fill="#d2d3e3"/><rect x="108.60" y="259.60" width="0.90" height="12.72" fill="#d2d3e3"/><rect x="149.30" y="259.60" width="0.90" height="12.72" fill="#d2d3e3"/><rect x="189.60" y="259.60" width="0.90" height="12.72" fill="#d2d3e3"/><rect x="236.00" y="259.60" width="271.90" height="12.72" fill="#c8e5ea"/><rect x="236.00" y="271.47" width="271.90" height="0.85" fill="#d2d3e3"/><rect x="273.30" y="259.60" width="0.90" height="12.72" fill="#d2d3e3"/><rect x="312.40" y="259.60" width="0.90" height="12.72" fill="#d2d3e3"/><rect x="351.50" y="259.60" width="0.90" height="12.72" fill="#d2d3e3"/><rect x="390.40" y="259.60" width="0.90" height="12.72" fill="#d2d3e3"/><rect x="429.30" y="259.60" width="0.90" height="12.72" fill="#d2d3e3"/><rect x="468.50" y="259.60" width="0.90" height="12.72" fill="#d2d3e3"/><rect x="507.90" y="259.60" width="0.90" height="12.72" fill="#d2d3e3"/><rect x="0.00" y="272.32" width="231.60" height="8.68" fill="#c8e5ea"/><rect x="0.00" y="280.15" width="231.60" height="0.85" fill="#d2d3e3"/><rect x="28.30" y="272.32" width="0.90" height="8.68" fill="#d2d3e3"/><rect x="68.20" y="272.32" width="0.90" height="8.68" fill="#d2d3e3"/><rect x="108.60" y="272.32" width="0.90" height="8.68" fill="#d2d3e3"/><rect x="149.30" y="272.32" width="0.90" height="8.68" fill="#d2d3e3"/><rect x="189.60" y="272.32" width="0.90" height="8.68" fill="#d2d3e3"/><rect x="236.00" y="272.32" width="271.90" height="8.68" fill="#a8c1e0"/><rect x="236.00" y="280.15" width="271.90" height="0.85" fill="#b9c9e2"/><rect x="273.30" y="272.32" width="0.90" height="8.68" fill="#b9c9e2"/><rect x="312.40" y="272.32" width="0.90" height="8.68" fill="#b9c9e2"/><rect x="351.50" y="272.32" width="0.90" height="8.68" fill="#b9c9e2"/><rect x="390.40" y="272.32" width="0.90" height="8.68" fill="#b9c9e2"/><rect x="429.30" y="272.32" width="0.90" height="8.68" fill="#b9c9e2"/><rect x="468.50" y="272.32" width="0.90" height="8.68" fill="#b9c9e2"/><rect x="507.90" y="272.32" width="0.90" height="8.68" fill="#b9c9e2"/></svg>
<div class="t " style="top:182.90px;letter-spacing:-0.369px;left:-141.17px;width:300px;text-align:center;">Delta</div>
<div class="t " style="top:182.90px;letter-spacing:-0.297px;left:-101.10px;width:300px;text-align:center;">Theta</div>
<div class="t " style="top:182.90px;letter-spacing:-0.353px;left:-60.92px;width:300px;text-align:center;">OrigPrice</div>
<div class="t " style="top:182.90px;letter-spacing:-0.375px;left:-20.36px;width:300px;text-align:center;">IVChg</div>
<div class="t " style="top:182.90px;letter-spacing:-0.430px;left:20.17px;width:300px;text-align:center;">Model</div>
<div class="t " style="top:182.90px;letter-spacing:-0.600px;left:61.90px;width:300px;text-align:center;">Pos</div>
<div class="t " style="top:182.90px;letter-spacing:-0.566px;left:104.93px;width:300px;text-align:center;">Mid</div>
<div class="t " style="top:182.90px;letter-spacing:-0.369px;left:143.53px;width:300px;text-align:center;">Delta</div>
<div class="t " style="top:182.90px;letter-spacing:-0.297px;left:182.60px;width:300px;text-align:center;">Theta</div>
<div class="t " style="top:182.90px;letter-spacing:-0.353px;left:221.63px;width:300px;text-align:center;">OrigPrice</div>
<div class="t " style="top:182.90px;letter-spacing:-0.375px;left:260.54px;width:300px;text-align:center;">IVChg</div>
<div class="t " style="top:182.90px;letter-spacing:-0.430px;left:299.62px;width:300px;text-align:center;">Model</div>
<div class="t " style="top:182.90px;letter-spacing:-0.600px;left:339.00px;width:300px;text-align:center;">Pos</div>
<div class="t " style="top:196.81px;letter-spacing:-0.198px;left:-274.10px;width:300px;text-align:right;">2.20</div>
<div class="t " style="top:196.81px;letter-spacing:-0.125px;left:-234.28px;width:300px;text-align:right;">-0.34</div>
<div class="t " style="top:196.81px;letter-spacing:-0.204px;left:-193.80px;width:300px;text-align:right;">27.30</div>
<div class="t " style="top:196.81px;letter-spacing:-0.198px;left:-153.10px;width:300px;text-align:right;">3.64</div>
<div class="t " style="top:196.81px;letter-spacing:0.300px;left:-70.30px;width:300px;text-align:right;">+2</div>
<div class="t red" style="top:196.81px;letter-spacing:-0.198px;left:-29.10px;width:300px;text-align:right;">2.15</div>
<div class="t " style="top:196.81px;letter-spacing:-0.198px;left:10.00px;width:300px;text-align:right;">2.62</div>
<div class="t " style="top:196.81px;letter-spacing:-0.125px;left:49.02px;width:300px;text-align:right;">-0.35</div>
<div class="t " style="top:209.53px;letter-spacing:-0.198px;left:-274.10px;width:300px;text-align:right;">2.80</div>
<div class="t " style="top:209.53px;letter-spacing:-0.125px;left:-234.28px;width:300px;text-align:right;">-0.42</div>
<div class="t grn" style="top:209.53px;letter-spacing:-0.198px;left:-29.10px;width:300px;text-align:right;">2.80</div>
<div class="t " style="top:209.53px;letter-spacing:-0.198px;left:10.00px;width:300px;text-align:right;">3.31</div>
<div class="t " style="top:209.53px;letter-spacing:-0.125px;left:49.02px;width:300px;text-align:right;">-0.43</div>
<div class="t " style="top:222.25px;letter-spacing:-0.198px;left:-274.10px;width:300px;text-align:right;">3.60</div>
<div class="t " style="top:222.25px;letter-spacing:-0.125px;left:-234.28px;width:300px;text-align:right;">-0.52</div>
<div class="t grn" style="top:222.25px;letter-spacing:-0.198px;left:-29.10px;width:300px;text-align:right;">3.70</div>
<div class="t " style="top:222.25px;letter-spacing:-0.198px;left:10.00px;width:300px;text-align:right;">4.22</div>
<div class="t " style="top:222.25px;letter-spacing:-0.125px;left:49.02px;width:300px;text-align:right;">-0.52</div>
<div class="t " style="top:234.97px;letter-spacing:-0.198px;left:-274.10px;width:300px;text-align:right;">4.69</div>
<div class="t " style="top:234.97px;letter-spacing:-0.125px;left:-234.28px;width:300px;text-align:right;">-0.65</div>
<div class="t grn" style="top:234.97px;letter-spacing:-0.198px;left:-29.10px;width:300px;text-align:right;">4.90</div>
<div class="t " style="top:234.97px;letter-spacing:-0.198px;left:10.00px;width:300px;text-align:right;">5.36</div>
<div class="t " style="top:234.97px;letter-spacing:-0.125px;left:49.02px;width:300px;text-align:right;">-0.64</div>
<div class="t " style="top:247.69px;letter-spacing:-0.198px;left:-274.10px;width:300px;text-align:right;">6.02</div>
<div class="t " style="top:247.69px;letter-spacing:-0.125px;left:-234.28px;width:300px;text-align:right;">-0.80</div>
<div class="t " style="top:247.69px;letter-spacing:-0.204px;left:-193.80px;width:300px;text-align:right;">55.90</div>
<div class="t " style="top:247.69px;letter-spacing:-0.198px;left:-153.10px;width:300px;text-align:right;">3.32</div>
<div class="t " style="top:247.69px;letter-spacing:-0.029px;left:-69.97px;width:300px;text-align:right;">-4</div>
<div class="t grn" style="top:247.69px;letter-spacing:-0.198px;left:-29.10px;width:300px;text-align:right;">6.50</div>
<div class="t " style="top:247.69px;letter-spacing:-0.198px;left:10.00px;width:300px;text-align:right;">6.79</div>
<div class="t " style="top:247.69px;letter-spacing:-0.125px;left:49.02px;width:300px;text-align:right;">-0.78</div>
<div class="t " style="top:260.41px;letter-spacing:-0.198px;left:-274.10px;width:300px;text-align:right;">7.67</div>
<div class="t " style="top:260.41px;letter-spacing:-0.125px;left:-234.28px;width:300px;text-align:right;">-0.97</div>
<div class="t red" style="top:260.41px;letter-spacing:-0.198px;left:-29.10px;width:300px;text-align:right;">8.60</div>
<div class="t " style="top:260.41px;letter-spacing:-0.198px;left:10.00px;width:300px;text-align:right;">8.56</div>
<div class="t " style="top:260.41px;letter-spacing:-0.125px;left:49.02px;width:300px;text-align:right;">-0.94</div>
<div class="t " style="top:273.13px;letter-spacing:-0.198px;left:-274.10px;width:300px;text-align:right;">9.62</div>
<div class="t " style="top:273.13px;letter-spacing:-0.125px;left:-234.28px;width:300px;text-align:right;">-1.16</div>
<div class="t grn" style="top:273.13px;letter-spacing:-0.078px;left:-29.22px;width:300px;text-align:right;">11.35</div>
<div class="t " style="top:273.13px;letter-spacing:-0.204px;left:10.00px;width:300px;text-align:right;">10.68</div>
<div class="t " style="top:273.13px;letter-spacing:-0.125px;left:49.02px;width:300px;text-align:right;">-1.12</div>
<div class="t b" style="top:168.60px;letter-spacing:0.147px;left:-62.07px;width:300px;text-align:center;">05 dic. 25 (17)</div>
<div class="t b" style="top:168.60px;letter-spacing:0.300px;left:-71.30px;width:300px;text-align:right;">21.08%</div>
<div class="t b" style="top:168.60px;letter-spacing:0.183px;left:238.30px;">Weekly</div>
<div class="t b" style="top:168.60px;letter-spacing:0.147px;left:224.93px;width:300px;text-align:center;">08 dic. 25 (20)</div>
<div class="t b" style="top:168.60px;letter-spacing:0.300px;left:216.20px;width:300px;text-align:right;">20.16%</div>
</div></div>
<div class="r" style="left:0;top:290px;width:524px;height:316.800px;overflow:hidden;"><div class="r" style="left:0;top:-290px;width:524px;height:675px;">
<svg width="540" height="675" viewBox="0 0 540 675"><rect x="-12.00" y="290.20" width="244.60" height="316.60" fill="#b7bfd1"/><rect x="-12.00" y="291.20" width="243.60" height="314.60" fill="#fff"/><rect x="235.00" y="290.20" width="284.30" height="316.60" fill="#b7bfd1"/><rect x="236.00" y="291.20" width="282.30" height="314.60" fill="#fff"/><rect x="0.00" y="290.20" width="231.60" height="14.00" fill="#f5f7fb"/><rect x="0.00" y="291.20" width="231.60" height="4.00" fill="#fafbfd"/><rect x="0.00" y="303.30" width="231.60" height="0.90" fill="#cdd3e1"/><rect x="28.30" y="290.70" width="0.90" height="13.00" fill="#d3d8e5"/><rect x="68.20" y="290.70" width="0.90" height="13.00" fill="#d3d8e5"/><rect x="108.60" y="290.70" width="0.90" height="13.00" fill="#d3d8e5"/><rect x="149.30" y="290.70" width="0.90" height="13.00" fill="#d3d8e5"/><rect x="189.60" y="290.70" width="0.90" height="13.00" fill="#d3d8e5"/><rect x="236.00" y="290.20" width="282.30" height="14.00" fill="#f5f7fb"/><rect x="236.00" y="291.20" width="282.30" height="4.00" fill="#fafbfd"/><rect x="236.00" y="303.30" width="282.30" height="0.90" fill="#cdd3e1"/><rect x="273.30" y="290.70" width="0.90" height="13.00" fill="#d3d8e5"/><rect x="312.40" y="290.70" width="0.90" height="13.00" fill="#d3d8e5"/><rect x="351.50" y="290.70" width="0.90" height="13.00" fill="#d3d8e5"/><rect x="390.40" y="290.70" width="0.90" height="13.00" fill="#d3d8e5"/><rect x="429.30" y="290.70" width="0.90" height="13.00" fill="#d3d8e5"/><rect x="468.50" y="290.70" width="0.90" height="13.00" fill="#d3d8e5"/><rect x="507.90" y="290.70" width="0.90" height="13.00" fill="#d3d8e5"/><rect x="508.80" y="304.20" width="9.50" height="301.60" fill="#ccd3e3"/><rect x="0.00" y="304.20" width="231.60" height="12.75" fill="#d1d3d2"/><rect x="0.00" y="316.10" width="231.60" height="0.85" fill="#dcdde0"/><rect x="28.30" y="304.20" width="0.90" height="12.75" fill="#dcdde0"/><rect x="68.20" y="304.20" width="0.90" height="12.75" fill="#dcdde0"/><rect x="108.60" y="304.20" width="0.90" height="12.75" fill="#dcdde0"/><rect x="149.30" y="304.20" width="0.90" height="12.75" fill="#dcdde0"/><rect x="189.60" y="304.20" width="0.90" height="12.75" fill="#dcdde0"/><rect x="236.00" y="304.20" width="271.90" height="12.75" fill="#d1d3d2"/><rect x="236.00" y="316.10" width="271.90" height="0.85" fill="#dcdde0"/><rect x="273.30" y="304.20" width="0.90" height="12.75" fill="#dcdde0"/><rect x="312.40" y="304.20" width="0.90" height="12.75" fill="#dcdde0"/><rect x="351.50" y="304.20" width="0.90" height="12.75" fill="#dcdde0"/><rect x="390.40" y="304.20" width="0.90" height="12.75" fill="#dcdde0"/><rect x="429.30" y="304.20" width="0.90" height="12.75" fill="#dcdde0"/><rect x="468.50" y="304.20" width="0.90" height="12.75" fill="#dcdde0"/><rect x="507.90" y="304.20" width="0.90" height="12.75" fill="#dcdde0"/><rect x="0.00" y="316.95" width="231.60" height="12.75" fill="#a8c1e0"/><rect x="0.00" y="328.85" width="231.60" height="0.85" fill="#b9c9e2"/><rect x="28.30" y="316.95" width="0.90" height="12.75" fill="#b9c9e2"/><rect x="68.20" y="316.95" width="0.90" height="12.75" fill="#b9c9e2"/><rect x="108.60" y="316.95" width="0.90" height="12.75" fill="#b9c9e2"/><rect x="149.30" y="316.95" width="0.90" height="12.75" fill="#b9c9e2"/><rect x="189.60" y="316.95" width="0.90" height="12.75" fill="#b9c9e2"/><rect x="236.00" y="316.95" width="271.90" height="12.75" fill="#a8c1e0"/><rect x="236.00" y="328.85" width="271.90" height="0.85" fill="#b9c9e2"/><rect x="273.30" y="316.95" width="0.90" height="12.75" fill="#b9c9e2"/><rect x="312.40" y="316.95" width="0.90" height="12.75" fill="#b9c9e2"/><rect x="351.50" y="316.95" width="0.90" height="12.75" fill="#b9c9e2"/><rect x="390.40" y="316.95" width="0.90" height="12.75" fill="#b9c9e2"/><rect x="429.30" y="316.95" width="0.90" height="12.75" fill="#b9c9e2"/><rect x="468.50" y="316.95" width="0.90" height="12.75" fill="#b9c9e2"/><rect x="507.90" y="316.95" width="0.90" height="12.75" fill="#b9c9e2"/><rect x="0.00" y="329.70" width="231.60" height="12.75" fill="#a8c1e0"/><rect x="0.00" y="341.60" width="231.60" height="0.85" fill="#b9c9e2"/><rect x="28.30" y="329.70" width="0.90" height="12.75" fill="#b9c9e2"/><rect x="68.20" y="329.70" width="0.90" height="12.75" fill="#b9c9e2"/><rect x="108.60" y="329.70" width="0.90" height="12.75" fill="#b9c9e2"/><rect x="149.30" y="329.70" width="0.90" height="12.75" fill="#b9c9e2"/><rect x="189.60" y="329.70" width="0.90" height="12.75" fill="#b9c9e2"/><rect x="236.00" y="329.70" width="271.90" height="12.75" fill="#a8c1e0"/><rect x="236.00" y="341.60" width="271.90" height="0.85" fill="#b9c9e2"/><rect x="273.30" y="329.70" width="0.90" height="12.75" fill="#b9c9e2"/><rect x="312.40" y="329.70" width="0.90" height="12.75" fill="#b9c9e2"/><rect x="351.50" y="329.70" width="0.90" height="12.75" fill="#b9c9e2"/><rect x="390.40" y="329.70" width="0.90" height="12.75" fill="#b9c9e2"/><rect x="429.30" y="329.70" width="0.90" height="12.75" fill="#b9c9e2"/><rect x="468.50" y="329.70" width="0.90" height="12.75" fill="#b9c9e2"/><rect x="507.90" y="329.70" width="0.90" height="12.75" fill="#b9c9e2"/><rect x="0.00" y="342.45" width="231.60" height="12.75" fill="#fffcf3"/><rect x="0.00" y="354.35" width="231.60" height="0.85" fill="#ece8da"/><rect x="28.30" y="342.45" width="0.90" height="12.75" fill="#ece8da"/><rect x="68.20" y="342.45" width="0.90" height="12.75" fill="#ece8da"/><rect x="108.60" y="342.45" width="0.90" height="12.75" fill="#ece8da"/><rect x="149.30" y="342.45" width="0.90" height="12.75" fill="#ece8da"/><rect x="189.60" y="342.45" width="0.90" height="12.75" fill="#ece8da"/><rect x="236.00" y="342.45" width="271.90" height="12.75" fill="#fffcf3"/><rect x="236.00" y="354.35" width="271.90" height="0.85" fill="#ece8da"/><rect x="273.30" y="342.45" width="0.90" height="12.75" fill="#ece8da"/><rect x="312.40" y="342.45" width="0.90" height="12.75" fill="#ece8da"/><rect x="351.50" y="342.45" width="0.90" height="12.75" fill="#ece8da"/><rect x="390.40" y="342.45" width="0.90" height="12.75" fill="#ece8da"/><rect x="429.30" y="342.45" width="0.90" height="12.75" fill="#ece8da"/><rect x="468.50" y="342.45" width="0.90" height="12.75" fill="#ece8da"/><rect x="507.90" y="342.45" width="0.90" height="12.75" fill="#ece8da"/><rect x="150.80" y="343.65" width="37.90" height="9.85" fill="#fdf1b5"/><rect x="0.00" y="355.20" width="231.60" height="12.75" fill="#a8c1e0"/><rect x="0.00" y="367.10" width="231.60" height="0.85" fill="#b9c9e2"/><rect x="28.30" y="355.20" width="0.90" height="12.75" fill="#b9c9e2"/><rect x="68.20" y="355.20" width="0.90" height="12.75" fill="#b9c9e2"/><rect x="108.60" y="355.20" width="0.90" height="12.75" fill="#b9c9e2"/><rect x="149.30" y="355.20" width="0.90" height="12.75" fill="#b9c9e2"/><rect x="189.60" y="355.20" width="0.90" height="12.75" fill="#b9c9e2"/><rect x="236.00" y="355.20" width="271.90" height="12.75" fill="#a8c1e0"/><rect x="236.00" y="367.10" width="271.90" height="0.85" fill="#b9c9e2"/><rect x="273.30" y="355.20" width="0.90" height="12.75" fill="#b9c9e2"/><rect x="312.40" y="355.20" width="0.90" height="12.75" fill="#b9c9e2"/><rect x="351.50" y="355.20" width="0.90" height="12.75" fill="#b9c9e2"/><rect x="390.40" y="355.20" width="0.90" height="12.75" fill="#b9c9e2"/><rect x="429.30" y="355.20" width="0.90" height="12.75" fill="#b9c9e2"/><rect x="468.50" y="355.20" width="0.90" height="12.75" fill="#b9c9e2"/><rect x="507.90" y="355.20" width="0.90" height="12.75" fill="#b9c9e2"/><rect x="0.00" y="367.95" width="231.60" height="12.75" fill="#a8c1e0"/><rect x="0.00" y="379.85" width="231.60" height="0.85" fill="#b9c9e2"/><rect x="28.30" y="367.95" width="0.90" height="12.75" fill="#b9c9e2"/><rect x="68.20" y="367.95" width="0.90" height="12.75" fill="#b9c9e2"/><rect x="108.60" y="367.95" width="0.90" height="12.75" fill="#b9c9e2"/><rect x="149.30" y="367.95" width="0.90" height="12.75" fill="#b9c9e2"/><rect x="189.60" y="367.95" width="0.90" height="12.75" fill="#b9c9e2"/><rect x="236.00" y="367.95" width="271.90" height="12.75" fill="#a8c1e0"/><rect x="236.00" y="379.85" width="271.90" height="0.85" fill="#b9c9e2"/><rect x="273.30" y="367.95" width="0.90" height="12.75" fill="#b9c9e2"/><rect x="312.40" y="367.95" width="0.90" height="12.75" fill="#b9c9e2"/><rect x="351.50" y="367.95" width="0.90" height="12.75" fill="#b9c9e2"/><rect x="390.40" y="367.95" width="0.90" height="12.75" fill="#b9c9e2"/><rect x="429.30" y="367.95" width="0.90" height="12.75" fill="#b9c9e2"/><rect x="468.50" y="367.95" width="0.90" height="12.75" fill="#b9c9e2"/><rect x="507.90" y="367.95" width="0.90" height="12.75" fill="#b9c9e2"/><rect x="0.00" y="380.70" width="231.60" height="12.75" fill="#a8c1e0"/><rect x="0.00" y="392.60" width="231.60" height="0.85" fill="#b9c9e2"/><rect x="28.30" y="380.70" width="0.90" height="12.75" fill="#b9c9e2"/><rect x="68.20" y="380.70" width="0.90" height="12.75" fill="#b9c9e2"/><rect x="108.60" y="380.70" width="0.90" height="12.75" fill="#b9c9e2"/><rect x="149.30" y="380.70" width="0.90" height="12.75" fill="#b9c9e2"/><rect x="189.60" y="380.70" width="0.90" height="12.75" fill="#b9c9e2"/><rect x="236.00" y="380.70" width="271.90" height="12.75" fill="#a8c1e0"/><rect x="236.00" y="392.60" width="271.90" height="0.85" fill="#b9c9e2"/><rect x="273.30" y="380.70" width="0.90" height="12.75" fill="#b9c9e2"/><rect x="312.40" y="380.70" width="0.90" height="12.75" fill="#b9c9e2"/><rect x="351.50" y="380.70" width="0.90" height="12.75" fill="#b9c9e2"/><rect x="390.40" y="380.70" width="0.90" height="12.75" fill="#b9c9e2"/><rect x="429.30" y="380.70" width="0.90" height="12.75" fill="#b9c9e2"/><rect x="468.50" y="380.70" width="0.90" height="12.75" fill="#b9c9e2"/><rect x="507.90" y="380.70" width="0.90" height="12.75" fill="#b9c9e2"/><rect x="0.00" y="393.45" width="231.60" height="12.75" fill="#a8c1e0"/><rect x="0.00" y="405.35" width="231.60" height="0.85" fill="#b9c9e2"/><rect x="28.30" y="393.45" width="0.90" height="12.75" fill="#b9c9e2"/><rect x="68.20" y="393.45" width="0.90" height="12.75" fill="#b9c9e2"/><rect x="108.60" y="393.45" width="0.90" height="12.75" fill="#b9c9e2"/><rect x="149.30" y="393.45" width="0.90" height="12.75" fill="#b9c9e2"/><rect x="189.60" y="393.45" width="0.90" height="12.75" fill="#b9c9e2"/><rect x="236.00" y="393.45" width="271.90" height="12.75" fill="#a8c1e0"/><rect x="236.00" y="405.35" width="271.90" height="0.85" fill="#b9c9e2"/><rect x="273.30" y="393.45" width="0.90" height="12.75" fill="#b9c9e2"/><rect x="312.40" y="393.45" width="0.90" height="12.75" fill="#b9c9e2"/><rect x="351.50" y="393.45" width="0.90" height="12.75" fill="#b9c9e2"/><rect x="390.40" y="393.45" width="0.90" height="12.75" fill="#b9c9e2"/><rect x="429.30" y="393.45" width="0.90" height="12.75" fill="#b9c9e2"/><rect x="468.50" y="393.45" width="0.90" height="12.75" fill="#b9c9e2"/><rect x="507.90" y="393.45" width="0.90" height="12.75" fill="#b9c9e2"/><rect x="0.00" y="406.20" width="231.60" height="12.75" fill="#a8c1e0"/><rect x="0.00" y="418.10" width="231.60" height="0.85" fill="#b9c9e2"/><rect x="28.30" y="406.20" width="0.90" height="12.75" fill="#b9c9e2"/><rect x="68.20" y="406.20" width="0.90" height="12.75" fill="#b9c9e2"/><rect x="108.60" y="406.20" width="0.90" height="12.75" fill="#b9c9e2"/><rect x="149.30" y="406.20" width="0.90" height="12.75" fill="#b9c9e2"/><rect x="189.60" y="406.20" width="0.90" height="12.75" fill="#b9c9e2"/><rect x="236.00" y="406.20" width="271.90" height="12.75" fill="#a8c1e0"/><rect x="236.00" y="418.10" width="271.90" height="0.85" fill="#b9c9e2"/><rect x="273.30" y="406.20" width="0.90" height="12.75" fill="#b9c9e2"/><rect x="312.40" y="406.20" width="0.90" height="12.75" fill="#b9c9e2"/><rect x="351.50" y="406.20" width="0.90" height="12.75" fill="#b9c9e2"/><rect x="390.40" y="406.20" width="0.90" height="12.75" fill="#b9c9e2"/><rect x="429.30" y="406.20" width="0.90" height="12.75" fill="#b9c9e2"/><rect x="468.50" y="406.20" width="0.90" height="12.75" fill="#b9c9e2"/><rect x="507.90" y="406.20" width="0.90" height="12.75" fill="#b9c9e2"/><rect x="0.00" y="418.95" width="231.60" height="12.75" fill="#a8c1e0"/><rect x="0.00" y="430.85" width="231.60" height="0.85" fill="#b9c9e2"/><rect x="28.30" y="418.95" width="0.90" height="12.75" fill="#b9c9e2"/><rect x="68.20" y="418.95" width="0.90" height="12.75" fill="#b9c9e2"/><rect x="108.60" y="418.95" width="0.90" height="12.75" fill="#b9c9e2"/><rect x="149.30" y="418.95" width="0.90" height="12.75" fill="#b9c9e2"/><rect x="189.60" y="418.95" width="0.90" height="12.75" fill="#b9c9e2"/><rect x="236.00" y="418.95" width="271.90" height="12.75" fill="#a8c1e0"/><rect x="236.00" y="430.85" width="271.90" height="0.85" fill="#b9c9e2"/><rect x="273.30" y="418.95" width="0.90" height="12.75" fill="#b9c9e2"/><rect x="312.40" y="418.95" width="0.90" height="12.75" fill="#b9c9e2"/><rect x="351.50" y="418.95" width="0.90" height="12.75" fill="#b9c9e2"/><rect x="390.40" y="418.95" width="0.90" height="12.75" fill="#b9c9e2"/><rect x="429.30" y="418.95" width="0.90" height="12.75" fill="#b9c9e2"/><rect x="468.50" y="418.95" width="0.90" height="12.75" fill="#b9c9e2"/><rect x="507.90" y="418.95" width="0.90" height="12.75" fill="#b9c9e2"/><rect x="0.00" y="431.70" width="231.60" height="12.75" fill="#a8c1e0"/><rect x="0.00" y="443.60" width="231.60" height="0.85" fill="#b9c9e2"/><rect x="28.30" y="431.70" width="0.90" height="12.75" fill="#b9c9e2"/><rect x="68.20" y="431.70" width="0.90" height="12.75" fill="#b9c9e2"/><rect x="108.60" y="431.70" width="0.90" height="12.75" fill="#b9c9e2"/><rect x="149.30" y="431.70" width="0.90" height="12.75" fill="#b9c9e2"/><rect x="189.60" y="431.70" width="0.90" height="12.75" fill="#b9c9e2"/><rect x="236.00" y="431.70" width="271.90" height="12.75" fill="#a8c1e0"/><rect x="236.00" y="443.60" width="271.90" height="0.85" fill="#b9c9e2"/><rect x="273.30" y="431.70" width="0.90" height="12.75" fill="#b9c9e2"/><rect x="312.40" y="431.70" width="0.90" height="12.75" fill="#b9c9e2"/><rect x="351.50" y="431.70" width="0.90" height="12.75" fill="#b9c9e2"/><rect x="390.40" y="431.70" width="0.90" height="12.75" fill="#b9c9e2"/><rect x="429.30" y="431.70" width="0.90" height="12.75" fill="#b9c9e2"/><rect x="468.50" y="431.70" width="0.90" height="12.75" fill="#b9c9e2"/><rect x="507.90" y="431.70" width="0.90" height="12.75" fill="#b9c9e2"/><rect x="0.00" y="444.45" width="231.60" height="12.75" fill="#a8c1e0"/><rect x="0.00" y="456.35" width="231.60" height="0.85" fill="#b9c9e2"/><rect x="28.30" y="444.45" width="0.90" height="12.75" fill="#b9c9e2"/><rect x="68.20" y="444.45" width="0.90" height="12.75" fill="#b9c9e2"/><rect x="108.60" y="444.45" width="0.90" height="12.75" fill="#b9c9e2"/><rect x="149.30" y="444.45" width="0.90" height="12.75" fill="#b9c9e2"/><rect x="189.60" y="444.45" width="0.90" height="12.75" fill="#b9c9e2"/><rect x="236.00" y="444.45" width="271.90" height="12.75" fill="#a8c1e0"/><rect x="236.00" y="456.35" width="271.90" height="0.85" fill="#b9c9e2"/><rect x="273.30" y="444.45" width="0.90" height="12.75" fill="#b9c9e2"/><rect x="312.40" y="444.45" width="0.90" height="12.75" fill="#b9c9e2"/><rect x="351.50" y="444.45" width="0.90" height="12.75" fill="#b9c9e2"/><rect x="390.40" y="444.45" width="0.90" height="12.75" fill="#b9c9e2"/><rect x="429.30" y="444.45" width="0.90" height="12.75" fill="#b9c9e2"/><rect x="468.50" y="444.45" width="0.90" height="12.75" fill="#b9c9e2"/><rect x="507.90" y="444.45" width="0.90" height="12.75" fill="#b9c9e2"/><rect x="0.00" y="457.20" width="231.60" height="12.75" fill="#a8c1e0"/><rect x="0.00" y="469.10" width="231.60" height="0.85" fill="#b9c9e2"/><rect x="28.30" y="457.20" width="0.90" height="12.75" fill="#b9c9e2"/><rect x="68.20" y="457.20" width="0.90" height="12.75" fill="#b9c9e2"/><rect x="108.60" y="457.20" width="0.90" height="12.75" fill="#b9c9e2"/><rect x="149.30" y="457.20" width="0.90" height="12.75" fill="#b9c9e2"/><rect x="189.60" y="457.20" width="0.90" height="12.75" fill="#b9c9e2"/><rect x="236.00" y="457.20" width="271.90" height="12.75" fill="#a8c1e0"/><rect x="236.00" y="469.10" width="271.90" height="0.85" fill="#b9c9e2"/><rect x="273.30" y="457.20" width="0.90" height="12.75" fill="#b9c9e2"/><rect x="312.40" y="457.20" width="0.90" height="12.75" fill="#b9c9e2"/><rect x="351.50" y="457.20" width="0.90" height="12.75" fill="#b9c9e2"/><rect x="390.40" y="457.20" width="0.90" height="12.75" fill="#b9c9e2"/><rect x="429.30" y="457.20" width="0.90" height="12.75" fill="#b9c9e2"/><rect x="468.50" y="457.20" width="0.90" height="12.75" fill="#b9c9e2"/><rect x="507.90" y="457.20" width="0.90" height="12.75" fill="#b9c9e2"/><rect x="0.00" y="469.95" width="231.60" height="12.75" fill="#a8c1e0"/><rect x="0.00" y="481.85" width="231.60" height="0.85" fill="#b9c9e2"/><rect x="28.30" y="469.95" width="0.90" height="12.75" fill="#b9c9e2"/><rect x="68.20" y="469.95" width="0.90" height="12.75" fill="#b9c9e2"/><rect x="108.60" y="469.95" width="0.90" height="12.75" fill="#b9c9e2"/><rect x="149.30" y="469.95" width="0.90" height="12.75" fill="#b9c9e2"/><rect x="189.60" y="469.95" width="0.90" height="12.75" fill="#b9c9e2"/><rect x="236.00" y="469.95" width="271.90" height="12.75" fill="#a8c1e0"/><rect x="236.00" y="481.85" width="271.90" height="0.85" fill="#b9c9e2"/><rect x="273.30" y="469.95" width="0.90" height="12.75" fill="#b9c9e2"/><rect x="312.40" y="469.95" width="0.90" height="12.75" fill="#b9c9e2"/><rect x="351.50" y="469.95" width="0.90" height="12.75" fill="#b9c9e2"/><rect x="390.40" y="469.95" width="0.90" height="12.75" fill="#b9c9e2"/><rect x="429.30" y="469.95" width="0.90" height="12.75" fill="#b9c9e2"/><rect x="468.50" y="469.95" width="0.90" height="12.75" fill="#b9c9e2"/><rect x="507.90" y="469.95" width="0.90" height="12.75" fill="#b9c9e2"/><rect x="0.00" y="482.70" width="231.60" height="12.75" fill="#a8c1e0"/><rect x="0.00" y="494.60" width="231.60" height="0.85" fill="#b9c9e2"/><rect x="28.30" y="482.70" width="0.90" height="12.75" fill="#b9c9e2"/><rect x="68.20" y="482.70" width="0.90" height="12.75" fill="#b9c9e2"/><rect x="108.60" y="482.70" width="0.90" height="12.75" fill="#b9c9e2"/><rect x="149.30" y="482.70" width="0.90" height="12.75" fill="#b9c9e2"/><rect x="189.60" y="482.70" width="0.90" height="12.75" fill="#b9c9e2"/><rect x="236.00" y="482.70" width="271.90" height="12.75" fill="#a8c1e0"/><rect x="236.00" y="494.60" width="271.90" height="0.85" fill="#b9c9e2"/><rect x="273.30" y="482.70" width="0.90" height="12.75" fill="#b9c9e2"/><rect x="312.40" y="482.70" width="0.90" height="12.75" fill="#b9c9e2"/><rect x="351.50" y="482.70" width="0.90" height="12.75" fill="#b9c9e2"/><rect x="390.40" y="482.70" width="0.90" height="12.75" fill="#b9c9e2"/><rect x="429.30" y="482.70" width="0.90" height="12.75" fill="#b9c9e2"/><rect x="468.50" y="482.70" width="0.90" height="12.75" fill="#b9c9e2"/><rect x="507.90" y="482.70" width="0.90" height="12.75" fill="#b9c9e2"/><rect x="0.00" y="495.45" width="231.60" height="12.75" fill="#a8c1e0"/><rect x="0.00" y="507.35" width="231.60" height="0.85" fill="#b9c9e2"/><rect x="28.30" y="495.45" width="0.90" height="12.75" fill="#b9c9e2"/><rect x="68.20" y="495.45" width="0.90" height="12.75" fill="#b9c9e2"/><rect x="108.60" y="495.45" width="0.90" height="12.75" fill="#b9c9e2"/><rect x="149.30" y="495.45" width="0.90" height="12.75" fill="#b9c9e2"/><rect x="189.60" y="495.45" width="0.90" height="12.75" fill="#b9c9e2"/><rect x="236.00" y="495.45" width="271.90" height="12.75" fill="#a8c1e0"/><rect x="236.00" y="507.35" width="271.90" height="0.85" fill="#b9c9e2"/><rect x="273.30" y="495.45" width="0.90" height="12.75" fill="#b9c9e2"/><rect x="312.40" y="495.45" width="0.90" height="12.75" fill="#b9c9e2"/><rect x="351.50" y="495.45" width="0.90" height="12.75" fill="#b9c9e2"/><rect x="390.40" y="495.45" width="0.90" height="12.75" fill="#b9c9e2"/><rect x="429.30" y="495.45" width="0.90" height="12.75" fill="#b9c9e2"/><rect x="468.50" y="495.45" width="0.90" height="12.75" fill="#b9c9e2"/><rect x="507.90" y="495.45" width="0.90" height="12.75" fill="#b9c9e2"/><rect x="0.00" y="508.20" width="231.60" height="12.75" fill="#a8c1e0"/><rect x="0.00" y="520.10" width="231.60" height="0.85" fill="#b9c9e2"/><rect x="28.30" y="508.20" width="0.90" height="12.75" fill="#b9c9e2"/><rect x="68.20" y="508.20" width="0.90" height="12.75" fill="#b9c9e2"/><rect x="108.60" y="508.20" width="0.90" height="12.75" fill="#b9c9e2"/><rect x="149.30" y="508.20" width="0.90" height="12.75" fill="#b9c9e2"/><rect x="189.60" y="508.20" width="0.90" height="12.75" fill="#b9c9e2"/><rect x="236.00" y="508.20" width="271.90" height="12.75" fill="#a8c1e0"/><rect x="236.00" y="520.10" width="271.90" height="0.85" fill="#b9c9e2"/><rect x="273.30" y="508.20" width="0.90" height="12.75" fill="#b9c9e2"/><rect x="312.40" y="508.20" width="0.90" height="12.75" fill="#b9c9e2"/><rect x="351.50" y="508.20" width="0.90" height="12.75" fill="#b9c9e2"/><rect x="390.40" y="508.20" width="0.90" height="12.75" fill="#b9c9e2"/><rect x="429.30" y="508.20" width="0.90" height="12.75" fill="#b9c9e2"/><rect x="468.50" y="508.20" width="0.90" height="12.75" fill="#b9c9e2"/><rect x="507.90" y="508.20" width="0.90" height="12.75" fill="#b9c9e2"/><rect x="0.00" y="520.95" width="231.60" height="12.75" fill="#c8e5ea"/><rect x="0.00" y="532.85" width="231.60" height="0.85" fill="#d2d3e3"/><rect x="28.30" y="520.95" width="0.90" height="12.75" fill="#d2d3e3"/><rect x="68.20" y="520.95" width="0.90" height="12.75" fill="#d2d3e3"/><rect x="108.60" y="520.95" width="0.90" height="12.75" fill="#d2d3e3"/><rect x="149.30" y="520.95" width="0.90" height="12.75" fill="#d2d3e3"/><rect x="189.60" y="520.95" width="0.90" height="12.75" fill="#d2d3e3"/><rect x="236.00" y="520.95" width="271.90" height="12.75" fill="#c8e5ea"/><rect x="236.00" y="532.85" width="271.90" height="0.85" fill="#d2d3e3"/><rect x="273.30" y="520.95" width="0.90" height="12.75" fill="#d2d3e3"/><rect x="312.40" y="520.95" width="0.90" height="12.75" fill="#d2d3e3"/><rect x="351.50" y="520.95" width="0.90" height="12.75" fill="#d2d3e3"/><rect x="390.40" y="520.95" width="0.90" height="12.75" fill="#d2d3e3"/><rect x="429.30" y="520.95" width="0.90" height="12.75" fill="#d2d3e3"/><rect x="468.50" y="520.95" width="0.90" height="12.75" fill="#d2d3e3"/><rect x="507.90" y="520.95" width="0.90" height="12.75" fill="#d2d3e3"/><rect x="0.00" y="533.70" width="231.60" height="12.75" fill="#c8e5ea"/><rect x="0.00" y="545.60" width="231.60" height="0.85" fill="#d2d3e3"/><rect x="28.30" y="533.70" width="0.90" height="12.75" fill="#d2d3e3"/><rect x="68.20" y="533.70" width="0.90" height="12.75" fill="#d2d3e3"/><rect x="108.60" y="533.70" width="0.90" height="12.75" fill="#d2d3e3"/><rect x="149.30" y="533.70" width="0.90" height="12.75" fill="#d2d3e3"/><rect x="189.60" y="533.70" width="0.90" height="12.75" fill="#d2d3e3"/><rect x="236.00" y="533.70" width="271.90" height="12.75" fill="#c8e5ea"/><rect x="236.00" y="545.60" width="271.90" height="0.85" fill="#d2d3e3"/><rect x="273.30" y="533.70" width="0.90" height="12.75" fill="#d2d3e3"/><rect x="312.40" y="533.70" width="0.90" height="12.75" fill="#d2d3e3"/><rect x="351.50" y="533.70" width="0.90" height="12.75" fill="#d2d3e3"/><rect x="390.40" y="533.70" width="0.90" height="12.75" fill="#d2d3e3"/><rect x="429.30" y="533.70" width="0.90" height="12.75" fill="#d2d3e3"/><rect x="468.50" y="533.70" width="0.90" height="12.75" fill="#d2d3e3"/><rect x="507.90" y="533.70" width="0.90" height="12.75" fill="#d2d3e3"/><rect x="0.00" y="546.45" width="231.60" height="12.75" fill="#c8e5ea"/><rect x="0.00" y="558.35" width="231.60" height="0.85" fill="#d2d3e3"/><rect x="28.30" y="546.45" width="0.90" height="12.75" fill="#d2d3e3"/><rect x="68.20" y="546.45" width="0.90" height="12.75" fill="#d2d3e3"/><rect x="108.60" y="546.45" width="0.90" height="12.75" fill="#d2d3e3"/><rect x="149.30" y="546.45" width="0.90" height="12.75" fill="#d2d3e3"/><rect x="189.60" y="546.45" width="0.90" height="12.75" fill="#d2d3e3"/><rect x="236.00" y="546.45" width="271.90" height="12.75" fill="#c8e5ea"/><rect x="236.00" y="558.35" width="271.90" height="0.85" fill="#d2d3e3"/><rect x="273.30" y="546.45" width="0.90" height="12.75" fill="#d2d3e3"/><rect x="312.40" y="546.45" width="0.90" height="12.75" fill="#d2d3e3"/><rect x="351.50" y="546.45" width="0.90" height="12.75" fill="#d2d3e3"/><rect x="390.40" y="546.45" width="0.90" height="12.75" fill="#d2d3e3"/><rect x="429.30" y="546.45" width="0.90" height="12.75" fill="#d2d3e3"/><rect x="468.50" y="546.45" width="0.90" height="12.75" fill="#d2d3e3"/><rect x="507.90" y="546.45" width="0.90" height="12.75" fill="#d2d3e3"/><rect x="0.00" y="559.20" width="231.60" height="12.75" fill="#c8e5ea"/><rect x="0.00" y="571.10" width="231.60" height="0.85" fill="#d2d3e3"/><rect x="28.30" y="559.20" width="0.90" height="12.75" fill="#d2d3e3"/><rect x="68.20" y="559.20" width="0.90" height="12.75" fill="#d2d3e3"/><rect x="108.60" y="559.20" width="0.90" height="12.75" fill="#d2d3e3"/><rect x="149.30" y="559.20" width="0.90" height="12.75" fill="#d2d3e3"/><rect x="189.60" y="559.20" width="0.90" height="12.75" fill="#d2d3e3"/><rect x="236.00" y="559.20" width="271.90" height="12.75" fill="#c8e5ea"/><rect x="236.00" y="571.10" width="271.90" height="0.85" fill="#d2d3e3"/><rect x="273.30" y="559.20" width="0.90" height="12.75" fill="#d2d3e3"/><rect x="312.40" y="559.20" width="0.90" height="12.75" fill="#d2d3e3"/><rect x="351.50" y="559.20" width="0.90" height="12.75" fill="#d2d3e3"/><rect x="390.40" y="559.20" width="0.90" height="12.75" fill="#d2d3e3"/><rect x="429.30" y="559.20" width="0.90" height="12.75" fill="#d2d3e3"/><rect x="468.50" y="559.20" width="0.90" height="12.75" fill="#d2d3e3"/><rect x="507.90" y="559.20" width="0.90" height="12.75" fill="#d2d3e3"/><rect x="0.00" y="571.95" width="231.60" height="12.75" fill="#c8e5ea"/><rect x="0.00" y="583.85" width="231.60" height="0.85" fill="#d2d3e3"/><rect x="28.30" y="571.95" width="0.90" height="12.75" fill="#d2d3e3"/><rect x="68.20" y="571.95" width="0.90" height="12.75" fill="#d2d3e3"/><rect x="108.60" y="571.95" width="0.90" height="12.75" fill="#d2d3e3"/><rect x="149.30" y="571.95" width="0.90" height="12.75" fill="#d2d3e3"/><rect x="189.60" y="571.95" width="0.90" height="12.75" fill="#d2d3e3"/><rect x="236.00" y="571.95" width="271.90" height="12.75" fill="#c8e5ea"/><rect x="236.00" y="583.85" width="271.90" height="0.85" fill="#d2d3e3"/><rect x="273.30" y="571.95" width="0.90" height="12.75" fill="#d2d3e3"/><rect x="312.40" y="571.95" width="0.90" height="12.75" fill="#d2d3e3"/><rect x="351.50" y="571.95" width="0.90" height="12.75" fill="#d2d3e3"/><rect x="390.40" y="571.95" width="0.90" height="12.75" fill="#d2d3e3"/><rect x="429.30" y="571.95" width="0.90" height="12.75" fill="#d2d3e3"/><rect x="468.50" y="571.95" width="0.90" height="12.75" fill="#d2d3e3"/><rect x="507.90" y="571.95" width="0.90" height="12.75" fill="#d2d3e3"/><rect x="0.00" y="584.70" width="231.60" height="12.75" fill="#c8e5ea"/><rect x="0.00" y="596.60" width="231.60" height="0.85" fill="#d2d3e3"/><rect x="28.30" y="584.70" width="0.90" height="12.75" fill="#d2d3e3"/><rect x="68.20" y="584.70" width="0.90" height="12.75" fill="#d2d3e3"/><rect x="108.60" y="584.70" width="0.90" height="12.75" fill="#d2d3e3"/><rect x="149.30" y="584.70" width="0.90" height="12.75" fill="#d2d3e3"/><rect x="189.60" y="584.70" width="0.90" height="12.75" fill="#d2d3e3"/><rect x="236.00" y="584.70" width="271.90" height="12.75" fill="#c8e5ea"/><rect x="236.00" y="596.60" width="271.90" height="0.85" fill="#d2d3e3"/><rect x="273.30" y="584.70" width="0.90" height="12.75" fill="#d2d3e3"/><rect x="312.40" y="584.70" width="0.90" height="12.75" fill="#d2d3e3"/><rect x="351.50" y="584.70" width="0.90" height="12.75" fill="#d2d3e3"/><rect x="390.40" y="584.70" width="0.90" height="12.75" fill="#d2d3e3"/><rect x="429.30" y="584.70" width="0.90" height="12.75" fill="#d2d3e3"/><rect x="468.50" y="584.70" width="0.90" height="12.75" fill="#d2d3e3"/><rect x="507.90" y="584.70" width="0.90" height="12.75" fill="#d2d3e3"/><rect x="0.00" y="597.45" width="231.60" height="8.35" fill="#c8e5ea"/><rect x="0.00" y="604.95" width="231.60" height="0.85" fill="#d2d3e3"/><rect x="28.30" y="597.45" width="0.90" height="8.35" fill="#d2d3e3"/><rect x="68.20" y="597.45" width="0.90" height="8.35" fill="#d2d3e3"/><rect x="108.60" y="597.45" width="0.90" height="8.35" fill="#d2d3e3"/><rect x="149.30" y="597.45" width="0.90" height="8.35" fill="#d2d3e3"/><rect x="189.60" y="597.45" width="0.90" height="8.35" fill="#d2d3e3"/><rect x="236.00" y="597.45" width="271.90" height="8.35" fill="#c8e5ea"/><rect x="236.00" y="604.95" width="271.90" height="0.85" fill="#d2d3e3"/><rect x="273.30" y="597.45" width="0.90" height="8.35" fill="#d2d3e3"/><rect x="312.40" y="597.45" width="0.90" height="8.35" fill="#d2d3e3"/><rect x="351.50" y="597.45" width="0.90" height="8.35" fill="#d2d3e3"/><rect x="390.40" y="597.45" width="0.90" height="8.35" fill="#d2d3e3"/><rect x="429.30" y="597.45" width="0.90" height="8.35" fill="#d2d3e3"/><rect x="468.50" y="597.45" width="0.90" height="8.35" fill="#d2d3e3"/><rect x="507.90" y="597.45" width="0.90" height="8.35" fill="#d2d3e3"/></svg>
<div class="t " style="top:291.40px;letter-spacing:-0.369px;left:-141.17px;width:300px;text-align:center;">Delta</div>
<div class="t " style="top:291.40px;letter-spacing:-0.297px;left:-101.10px;width:300px;text-align:center;">Theta</div>
<div class="t " style="top:291.40px;letter-spacing:-0.353px;left:-60.92px;width:300px;text-align:center;">OrigPrice</div>
<div class="t " style="top:291.40px;letter-spacing:-0.375px;left:-20.36px;width:300px;text-align:center;">IVChg</div>
<div class="t " style="top:291.40px;letter-spacing:-0.430px;left:20.17px;width:300px;text-align:center;">Model</div>
<div class="t " style="top:291.40px;letter-spacing:-0.600px;left:61.90px;width:300px;text-align:center;">Pos</div>
<div class="t " style="top:291.40px;letter-spacing:-0.566px;left:104.93px;width:300px;text-align:center;">Mid</div>
<div class="t " style="top:291.40px;letter-spacing:-0.369px;left:143.53px;width:300px;text-align:center;">Delta</div>
<div class="t " style="top:291.40px;letter-spacing:-0.297px;left:182.60px;width:300px;text-align:center;">Theta</div>
<div class="t " style="top:291.40px;letter-spacing:-0.353px;left:221.63px;width:300px;text-align:center;">OrigPrice</div>
<div class="t " style="top:291.40px;letter-spacing:-0.375px;left:260.54px;width:300px;text-align:center;">IVChg</div>
<div class="t " style="top:291.40px;letter-spacing:-0.430px;left:299.62px;width:300px;text-align:center;">Model</div>
<div class="t " style="top:291.40px;letter-spacing:-0.600px;left:339.00px;width:300px;text-align:center;">Pos</div>
<div class="t " style="top:305.47px;letter-spacing:-0.142px;left:-274.16px;width:300px;text-align:right;">-62.73</div>
<div class="t " style="top:305.47px;letter-spacing:-0.125px;left:-234.28px;width:300px;text-align:right;">-2.43</div>
<div class="t " style="top:305.47px;letter-spacing:-0.208px;left:-193.79px;width:300px;text-align:right;">152.21</div>
<div class="t " style="top:305.47px;letter-spacing:-0.198px;left:-153.10px;width:300px;text-align:right;">1.03</div>
<div class="t " style="top:305.47px;letter-spacing:0.300px;left:-113.30px;width:300px;text-align:right;">+1</div>
<div class="t " style="top:305.47px;letter-spacing:-0.029px;left:-69.97px;width:300px;text-align:right;">-1</div>
<div class="t grn" style="top:305.47px;letter-spacing:-0.208px;left:-29.09px;width:300px;text-align:right;">162.85</div>
<div class="t " style="top:305.47px;letter-spacing:-0.142px;left:9.94px;width:300px;text-align:right;">-61.74</div>
<div class="t " style="top:305.47px;letter-spacing:-0.125px;left:49.02px;width:300px;text-align:right;">-2.14</div>
<div class="t " style="top:318.22px;letter-spacing:-0.037px;left:-274.26px;width:300px;text-align:right;">-59.11</div>
<div class="t " style="top:318.22px;letter-spacing:-0.125px;left:-234.28px;width:300px;text-align:right;">-2.56</div>
<div class="t " style="top:318.22px;letter-spacing:-0.204px;left:-193.80px;width:300px;text-align:right;">85.45</div>
<div class="t " style="top:318.22px;letter-spacing:-0.198px;left:-153.10px;width:300px;text-align:right;">1.88</div>
<div class="t " style="top:318.22px;letter-spacing:-0.029px;left:-69.97px;width:300px;text-align:right;">-1</div>
<div class="t grn" style="top:318.22px;letter-spacing:-0.208px;left:-29.09px;width:300px;text-align:right;">148.00</div>
<div class="t " style="top:318.22px;letter-spacing:-0.142px;left:9.94px;width:300px;text-align:right;">-58.29</div>
<div class="t " style="top:318.22px;letter-spacing:-0.125px;left:49.02px;width:300px;text-align:right;">-2.25</div>
<div class="t " style="top:330.97px;letter-spacing:-0.142px;left:-274.16px;width:300px;text-align:right;">-55.32</div>
<div class="t " style="top:330.97px;letter-spacing:-0.125px;left:-234.28px;width:300px;text-align:right;">-2.72</div>
<div class="t " style="top:330.97px;letter-spacing:-0.029px;left:-112.97px;width:300px;text-align:right;">-1</div>
<div class="t grn" style="top:330.97px;letter-spacing:-0.208px;left:-29.09px;width:300px;text-align:right;">135.90</div>
<div class="t " style="top:330.97px;letter-spacing:-0.142px;left:9.94px;width:300px;text-align:right;">-54.68</div>
<div class="t " style="top:330.97px;letter-spacing:-0.125px;left:49.02px;width:300px;text-align:right;">-2.38</div>
<div class="t " style="top:343.72px;letter-spacing:-0.142px;left:-274.16px;width:300px;text-align:right;">-51.65</div>
<div class="t " style="top:343.72px;letter-spacing:-0.125px;left:-234.28px;width:300px;text-align:right;">-2.86</div>
<div class="t grn" style="top:343.72px;letter-spacing:-0.208px;left:-29.09px;width:300px;text-align:right;">124.90</div>
<div class="t " style="top:343.72px;letter-spacing:-0.142px;left:9.94px;width:300px;text-align:right;">-51.17</div>
<div class="t " style="top:343.72px;letter-spacing:-0.125px;left:49.02px;width:300px;text-align:right;">-2.49</div>
<div class="t " style="top:356.47px;letter-spacing:-0.037px;left:-274.26px;width:300px;text-align:right;">-48.11</div>
<div class="t " style="top:356.47px;letter-spacing:-0.125px;left:-234.28px;width:300px;text-align:right;">-2.96</div>
<div class="t red" style="top:356.47px;letter-spacing:-0.103px;left:-29.20px;width:300px;text-align:right;">114.90</div>
<div class="t " style="top:356.47px;letter-spacing:-0.142px;left:9.94px;width:300px;text-align:right;">-47.79</div>
<div class="t " style="top:356.47px;letter-spacing:-0.125px;left:49.02px;width:300px;text-align:right;">-2.59</div>
<div class="t " style="top:369.22px;letter-spacing:-0.142px;left:-274.16px;width:300px;text-align:right;">-44.74</div>
<div class="t " style="top:369.22px;letter-spacing:-0.125px;left:-234.28px;width:300px;text-align:right;">-3.05</div>
<div class="t red" style="top:369.22px;letter-spacing:-0.208px;left:-29.09px;width:300px;text-align:right;">105.60</div>
<div class="t " style="top:369.22px;letter-spacing:-0.142px;left:9.94px;width:300px;text-align:right;">-44.57</div>
<div class="t " style="top:369.22px;letter-spacing:-0.125px;left:49.02px;width:300px;text-align:right;">-2.66</div>
<div class="t " style="top:381.97px;letter-spacing:-0.142px;left:-274.16px;width:300px;text-align:right;">-41.54</div>
<div class="t " style="top:381.97px;letter-spacing:-0.125px;left:-234.28px;width:300px;text-align:right;">-3.10</div>
<div class="t red" style="top:381.97px;letter-spacing:-0.204px;left:-29.10px;width:300px;text-align:right;">97.05</div>
<div class="t " style="top:381.97px;letter-spacing:-0.142px;left:9.94px;width:300px;text-align:right;">-41.50</div>
<div class="t " style="top:381.97px;letter-spacing:-0.125px;left:49.02px;width:300px;text-align:right;">-2.71</div>
<div class="t " style="top:394.72px;letter-spacing:-0.142px;left:-274.16px;width:300px;text-align:right;">-38.52</div>
<div class="t " style="top:394.72px;letter-spacing:-0.125px;left:-234.28px;width:300px;text-align:right;">-3.14</div>
<div class="t red" style="top:394.72px;letter-spacing:-0.204px;left:-29.10px;width:300px;text-align:right;">89.20</div>
<div class="t " style="top:394.72px;letter-spacing:-0.142px;left:9.94px;width:300px;text-align:right;">-38.60</div>
<div class="t " style="top:394.72px;letter-spacing:-0.125px;left:49.02px;width:300px;text-align:right;">-2.74</div>
<div class="t " style="top:407.47px;letter-spacing:-0.142px;left:-274.16px;width:300px;text-align:right;">-35.69</div>
<div class="t " style="top:407.47px;letter-spacing:-0.125px;left:-234.28px;width:300px;text-align:right;">-3.16</div>
<div class="t red" style="top:407.47px;letter-spacing:-0.204px;left:-29.10px;width:300px;text-align:right;">82.05</div>
<div class="t " style="top:407.47px;letter-spacing:-0.142px;left:9.94px;width:300px;text-align:right;">-35.86</div>
<div class="t " style="top:407.47px;letter-spacing:-0.125px;left:49.02px;width:300px;text-align:right;">-2.76</div>
<div class="t " style="top:420.22px;letter-spacing:-0.142px;left:-274.16px;width:300px;text-align:right;">-33.02</div>
<div class="t " style="top:420.22px;letter-spacing:-0.125px;left:-234.28px;width:300px;text-align:right;">-3.15</div>
<div class="t red" style="top:420.22px;letter-spacing:-0.204px;left:-29.10px;width:300px;text-align:right;">75.60</div>
<div class="t " style="top:420.22px;letter-spacing:-0.142px;left:9.94px;width:300px;text-align:right;">-33.31</div>
<div class="t " style="top:420.22px;letter-spacing:-0.125px;left:49.02px;width:300px;text-align:right;">-2.76</div>
<div class="t " style="top:432.97px;letter-spacing:-0.142px;left:-274.16px;width:300px;text-align:right;">-30.55</div>
<div class="t " style="top:432.97px;letter-spacing:-0.125px;left:-234.28px;width:300px;text-align:right;">-3.13</div>
<div class="t red" style="top:432.97px;letter-spacing:-0.204px;left:-29.10px;width:300px;text-align:right;">69.45</div>
<div class="t " style="top:432.97px;letter-spacing:-0.142px;left:9.94px;width:300px;text-align:right;">-30.89</div>
<div class="t " style="top:432.97px;letter-spacing:-0.125px;left:49.02px;width:300px;text-align:right;">-2.74</div>
<div class="t " style="top:445.72px;letter-spacing:-0.142px;left:-274.16px;width:300px;text-align:right;">-28.23</div>
<div class="t " style="top:445.72px;letter-spacing:-0.125px;left:-234.28px;width:300px;text-align:right;">-3.09</div>
<div class="t red" style="top:445.72px;letter-spacing:-0.204px;left:-29.10px;width:300px;text-align:right;">63.95</div>
<div class="t " style="top:445.72px;letter-spacing:-0.142px;left:9.94px;width:300px;text-align:right;">-28.65</div>
<div class="t " style="top:445.72px;letter-spacing:-0.125px;left:49.02px;width:300px;text-align:right;">-2.72</div>
<div class="t " style="top:458.47px;letter-spacing:-0.142px;left:-274.16px;width:300px;text-align:right;">-26.08</div>
<div class="t " style="top:458.47px;letter-spacing:-0.125px;left:-234.28px;width:300px;text-align:right;">-3.05</div>
<div class="t red" style="top:458.47px;letter-spacing:-0.204px;left:-29.10px;width:300px;text-align:right;">58.90</div>
<div class="t " style="top:458.47px;letter-spacing:-0.142px;left:9.94px;width:300px;text-align:right;">-26.55</div>
<div class="t " style="top:458.47px;letter-spacing:-0.125px;left:49.02px;width:300px;text-align:right;">-2.68</div>
<div class="t " style="top:471.22px;letter-spacing:-0.142px;left:-274.16px;width:300px;text-align:right;">-24.09</div>
<div class="t " style="top:471.22px;letter-spacing:-0.125px;left:-234.28px;width:300px;text-align:right;">-2.99</div>
<div class="t grn" style="top:471.22px;letter-spacing:-0.204px;left:-29.10px;width:300px;text-align:right;">54.25</div>
<div class="t " style="top:471.22px;letter-spacing:-0.142px;left:9.94px;width:300px;text-align:right;">-24.60</div>
<div class="t " style="top:471.22px;letter-spacing:-0.125px;left:49.02px;width:300px;text-align:right;">-2.64</div>
<div class="t " style="top:483.97px;letter-spacing:-0.142px;left:-274.16px;width:300px;text-align:right;">-22.23</div>
<div class="t " style="top:483.97px;letter-spacing:-0.125px;left:-234.28px;width:300px;text-align:right;">-2.93</div>
<div class="t grn" style="top:483.97px;letter-spacing:-0.204px;left:-29.10px;width:300px;text-align:right;">50.05</div>
<div class="t " style="top:483.97px;letter-spacing:-0.142px;left:9.94px;width:300px;text-align:right;">-22.80</div>
<div class="t " style="top:483.97px;letter-spacing:-0.125px;left:49.02px;width:300px;text-align:right;">-2.59</div>
<div class="t " style="top:496.72px;letter-spacing:-0.142px;left:-274.16px;width:300px;text-align:right;">-20.53</div>
<div class="t " style="top:496.72px;letter-spacing:-0.125px;left:-234.28px;width:300px;text-align:right;">-2.86</div>
<div class="t grn" style="top:496.72px;letter-spacing:-0.204px;left:-29.10px;width:300px;text-align:right;">46.10</div>
<div class="t " style="top:496.72px;letter-spacing:-0.037px;left:9.84px;width:300px;text-align:right;">-21.11</div>
<div class="t " style="top:496.72px;letter-spacing:-0.125px;left:49.02px;width:300px;text-align:right;">-2.53</div>
<div class="t " style="top:509.48px;letter-spacing:-0.142px;left:-274.16px;width:300px;text-align:right;">-18.95</div>
<div class="t " style="top:509.48px;letter-spacing:-0.125px;left:-234.28px;width:300px;text-align:right;">-2.78</div>
<div class="t grn" style="top:509.48px;letter-spacing:-0.204px;left:-29.10px;width:300px;text-align:right;">42.55</div>
<div class="t " style="top:509.48px;letter-spacing:-0.142px;left:9.94px;width:300px;text-align:right;">-19.55</div>
<div class="t " style="top:509.48px;letter-spacing:-0.125px;left:49.02px;width:300px;text-align:right;">-2.47</div>
<div class="t " style="top:522.23px;letter-spacing:-0.142px;left:-274.16px;width:300px;text-align:right;">-17.51</div>
<div class="t " style="top:522.23px;letter-spacing:-0.125px;left:-234.28px;width:300px;text-align:right;">-2.70</div>
<div class="t red" style="top:522.23px;letter-spacing:-0.204px;left:-29.10px;width:300px;text-align:right;">39.30</div>
<div class="t " style="top:522.23px;letter-spacing:-0.037px;left:9.84px;width:300px;text-align:right;">-18.11</div>
<div class="t " style="top:522.23px;letter-spacing:-0.125px;left:49.02px;width:300px;text-align:right;">-2.41</div>
<div class="t " style="top:534.98px;letter-spacing:-0.142px;left:-274.16px;width:300px;text-align:right;">-16.16</div>
<div class="t " style="top:534.98px;letter-spacing:-0.125px;left:-234.28px;width:300px;text-align:right;">-2.62</div>
<div class="t grn" style="top:534.98px;letter-spacing:-0.204px;left:-29.10px;width:300px;text-align:right;">36.30</div>
<div class="t " style="top:534.98px;letter-spacing:-0.142px;left:9.94px;width:300px;text-align:right;">-16.77</div>
<div class="t " style="top:534.98px;letter-spacing:-0.125px;left:49.02px;width:300px;text-align:right;">-2.34</div>
<div class="t " style="top:547.73px;letter-spacing:-0.142px;left:-274.16px;width:300px;text-align:right;">-14.94</div>
<div class="t " style="top:547.73px;letter-spacing:-0.125px;left:-234.28px;width:300px;text-align:right;">-2.54</div>
<div class="t red" style="top:547.73px;letter-spacing:-0.204px;left:-29.10px;width:300px;text-align:right;">33.60</div>
<div class="t " style="top:547.73px;letter-spacing:-0.142px;left:9.94px;width:300px;text-align:right;">-15.55</div>
<div class="t " style="top:547.73px;letter-spacing:-0.125px;left:49.02px;width:300px;text-align:right;">-2.27</div>
<div class="t " style="top:560.48px;letter-spacing:-0.142px;left:-274.16px;width:300px;text-align:right;">-13.80</div>
<div class="t " style="top:560.48px;letter-spacing:-0.125px;left:-234.28px;width:300px;text-align:right;">-2.45</div>
<div class="t grn" style="top:560.48px;letter-spacing:-0.204px;left:-29.10px;width:300px;text-align:right;">31.15</div>
<div class="t " style="top:560.48px;letter-spacing:-0.142px;left:9.94px;width:300px;text-align:right;">-14.42</div>
<div class="t " style="top:560.48px;letter-spacing:-0.125px;left:49.02px;width:300px;text-align:right;">-2.20</div>
<div class="t " style="top:573.23px;letter-spacing:-0.142px;left:-274.16px;width:300px;text-align:right;">-12.81</div>
<div class="t " style="top:573.23px;letter-spacing:-0.125px;left:-234.28px;width:300px;text-align:right;">-2.37</div>
<div class="t red" style="top:573.23px;letter-spacing:-0.204px;left:-29.10px;width:300px;text-align:right;">28.90</div>
<div class="t " style="top:573.23px;letter-spacing:-0.142px;left:9.94px;width:300px;text-align:right;">-13.38</div>
<div class="t " style="top:573.23px;letter-spacing:-0.125px;left:49.02px;width:300px;text-align:right;">-2.14</div>
<div class="t " style="top:585.98px;letter-spacing:-0.037px;left:-274.26px;width:300px;text-align:right;">-11.84</div>
<div class="t " style="top:585.98px;letter-spacing:-0.125px;left:-234.28px;width:300px;text-align:right;">-2.29</div>
<div class="t red" style="top:585.98px;letter-spacing:-0.204px;left:-29.10px;width:300px;text-align:right;">26.85</div>
<div class="t " style="top:585.98px;letter-spacing:-0.142px;left:9.94px;width:300px;text-align:right;">-12.43</div>
<div class="t " style="top:585.98px;letter-spacing:-0.125px;left:49.02px;width:300px;text-align:right;">-2.07</div>
<div class="t " style="top:598.73px;letter-spacing:-0.142px;left:-274.16px;width:300px;text-align:right;">-10.97</div>
<div class="t " style="top:598.73px;letter-spacing:-0.125px;left:-234.28px;width:300px;text-align:right;">-2.21</div>
<div class="t red" style="top:598.73px;letter-spacing:-0.204px;left:-29.10px;width:300px;text-align:right;">25.00</div>
<div class="t " style="top:598.73px;letter-spacing:-0.037px;left:9.84px;width:300px;text-align:right;">-11.56</div>
<div class="t " style="top:598.73px;letter-spacing:-0.125px;left:49.02px;width:300px;text-align:right;">-2.00</div>
</div></div>
<svg width="540" height="675" viewBox="0 0 540 675">
<path d="M511.300 203l2.300-2.600 2.300 2.600z" fill="#5d6884"/><path d="M511.300 275l2.300 2.600 2.300-2.600z" fill="#5d6884"/>
<rect x="510.600" y="220.800" width="5.800" height="11.600" fill="#8f9cb8"/>
<path d="M511.300 311.600l2.300-2.600 2.300 2.600z" fill="#5d6884"/><path d="M511.300 599.200l2.300 2.600 2.300-2.600z" fill="#5d6884"/>
<rect x="510.600" y="405.500" width="5.800" height="28.500" fill="#8f9cb8"/>
<text x="522.600" y="397" font-size="4.500" fill="#aab2c6" letter-spacing="-.3" transform="rotate(90 522.600 397)">xxxx</text>
</svg>
<div class="r" style="left:-30.00px;top:616.70px;width:94.20px;height:12.50px;background:#fff;border:1px solid #b9c1d2;"></div>
<div class="t " style="top:617.00px;letter-spacing:-0.316px;left:-28.50px;">Unfolded</div>
<div class="r" style="left:70.70px;top:616.70px;width:52.60px;height:12.50px;background:#fff;border:1px solid #b9c1d2;"></div>
<div class="t " style="top:617.00px;letter-spacing:-0.247px;left:74.00px;">Auto</div>
<svg width="540" height="675" viewBox="0 0 540 675"><path d="M57 622l1.900 2.200 1.900-2.200z" fill="#4a4f63"/><path d="M116.200 622l1.900 2.200 1.900-2.200z" fill="#4a4f63"/><rect x="424.300" y="618.300" width="8" height="8" fill="#fff" stroke="#b9c0d0" stroke-width=".8"/></svg>
<div class="t " style="top:616.30px;letter-spacing:-0.141px;left:435.30px;">Ignore Today's Trades</div>
<div class="r" style="left:0.00px;top:613.60px;width:524.00px;height:1.00px;background:#cbd1e0;"></div>
<div class="r" style="left:-4.40px;top:631.00px;width:524.00px;height:40.00px;background:#fff;border:1px solid #c0c7d7;"></div>
<div class="r" style="left:-4.40px;top:632.00px;width:524.00px;height:13.40px;background:linear-gradient(#f8f9fc,#eef1f7);border-top:1px solid #c5cbda;border-bottom:1px solid #cfd4e2;"></div>
<div class="t " style="top:633.00px;letter-spacing:-0.432px;left:-130.08px;width:300px;text-align:center;">Cost</div>
<div class="r" style="left:42.80px;top:633.00px;width:1.00px;height:11.40px;background:#d3d7e4;"></div>
<div class="t " style="top:633.00px;letter-spacing:-0.291px;left:-83.10px;width:300px;text-align:center;">Curr Cost</div>
<div class="r" style="left:89.70px;top:633.00px;width:1.00px;height:11.40px;background:#d3d7e4;"></div>
<div class="t " style="top:633.00px;letter-spacing:-0.551px;left:-36.07px;width:300px;text-align:center;">Commission</div>
<div class="r" style="left:136.60px;top:633.00px;width:1.00px;height:11.40px;background:#d3d7e4;"></div>
<div class="t " style="top:633.00px;letter-spacing:-0.600px;left:10.85px;width:300px;text-align:center;">PnL</div>
<div class="r" style="left:183.50px;top:633.00px;width:1.00px;height:11.40px;background:#d3d7e4;"></div>
<div class="t " style="top:633.00px;letter-spacing:-0.421px;left:57.66px;width:300px;text-align:center;">PnL%</div>
<div class="r" style="left:230.40px;top:633.00px;width:1.00px;height:11.40px;background:#d3d7e4;"></div>
<div class="t " style="top:633.00px;letter-spacing:-0.369px;left:104.53px;width:300px;text-align:center;">Delta</div>
<div class="r" style="left:277.30px;top:633.00px;width:1.00px;height:11.40px;background:#d3d7e4;"></div>
<div class="t " style="top:633.00px;letter-spacing:-0.600px;left:151.55px;width:300px;text-align:center;">Gamma</div>
<div class="r" style="left:324.20px;top:633.00px;width:1.00px;height:11.40px;background:#d3d7e4;"></div>
<div class="t " style="top:633.00px;letter-spacing:-0.297px;left:198.30px;width:300px;text-align:center;">Theta</div>
<div class="r" style="left:371.10px;top:633.00px;width:1.00px;height:11.40px;background:#d3d7e4;"></div>
<div class="t " style="top:633.00px;letter-spacing:-0.346px;left:245.22px;width:300px;text-align:center;">Vega</div>
<div class="r" style="left:418.00px;top:633.00px;width:1.00px;height:11.40px;background:#d3d7e4;"></div>
<div class="t " style="top:633.00px;letter-spacing:-0.314px;left:292.11px;width:300px;text-align:center;">T/D</div>
<div class="r" style="left:464.90px;top:633.00px;width:1.00px;height:11.40px;background:#d3d7e4;"></div>
<div class="t " style="top:633.00px;letter-spacing:-0.474px;left:342.99px;width:300px;text-align:center;">Plot</div>
<div class="r" style="left:-3.40px;top:657.20px;width:522.00px;height:0.80px;background:#dfe3ec;"></div>
<div class="r" style="left:42.80px;top:645.20px;width:0.90px;height:12.70px;background:#dfe3ec;"></div>
<div class="t " style="top:646.50px;letter-spacing:-0.165px;left:-259.64px;width:300px;text-align:right;">-20,446.79</div>
<div class="r" style="left:89.70px;top:645.20px;width:0.90px;height:12.70px;background:#dfe3ec;"></div>
<div class="t " style="top:646.50px;letter-spacing:-0.202px;left:-212.70px;width:300px;text-align:right;">19,430.00</div>
<div class="r" style="left:136.60px;top:645.20px;width:0.90px;height:12.70px;background:#dfe3ec;"></div>
<div class="t " style="top:646.50px;letter-spacing:-0.204px;left:-165.80px;width:300px;text-align:right;">16.80</div>
<div class="r" style="left:183.50px;top:645.20px;width:0.90px;height:12.70px;background:#dfe3ec;"></div>
<div class="t red" style="top:646.50px;letter-spacing:-0.158px;left:-118.94px;width:300px;text-align:right;">-1,016.79</div>
<div class="r" style="left:230.40px;top:645.20px;width:0.90px;height:12.70px;background:#dfe3ec;"></div>
<div class="t red" style="top:646.50px;letter-spacing:0.011px;left:-72.21px;width:300px;text-align:right;">-7.54%</div>
<div class="r" style="left:277.30px;top:645.20px;width:0.90px;height:12.70px;background:#dfe3ec;"></div>
<div class="t " style="top:646.50px;letter-spacing:-0.204px;left:-25.10px;width:300px;text-align:right;">15.94</div>
<div class="r" style="left:324.20px;top:645.20px;width:0.90px;height:12.70px;background:#dfe3ec;"></div>
<div class="t " style="top:646.50px;letter-spacing:-0.125px;left:21.72px;width:300px;text-align:right;">-0.08</div>
<div class="r" style="left:371.10px;top:645.20px;width:0.90px;height:12.70px;background:#dfe3ec;"></div>
<div class="t " style="top:646.50px;letter-spacing:-0.208px;left:68.71px;width:300px;text-align:right;">219.25</div>
<div class="r" style="left:418.00px;top:645.20px;width:0.90px;height:12.70px;background:#dfe3ec;"></div>
<div class="t " style="top:646.50px;letter-spacing:-0.031px;left:115.43px;width:300px;text-align:right;">1117.19</div>
<div class="r" style="left:464.90px;top:645.20px;width:0.90px;height:12.70px;background:#dfe3ec;"></div>
<div class="t " style="top:646.50px;letter-spacing:-0.198px;left:162.50px;width:300px;text-align:right;">13.8</div>
<svg width="540" height="675" viewBox="0 0 540 675"><rect x="488.6" y="647.5" width="8" height="8" fill="#fff" stroke="#b9c0d0" stroke-width=".8"/><path d="M490.4 651.5l1.900 2.100 3.400-4.300" stroke="#4d5266" stroke-width=".9" fill="none"/></svg>
<div class="r" style="left:-3.40px;top:669.90px;width:522.00px;height:0.80px;background:#dfe3ec;"></div>
<div class="r" style="left:42.80px;top:657.90px;width:0.90px;height:12.70px;background:#dfe3ec;"></div>
<div class="t " style="top:659.20px;letter-spacing:-0.165px;left:-259.64px;width:300px;text-align:right;">-23,163.19</div>
<div class="r" style="left:89.70px;top:657.90px;width:0.90px;height:12.70px;background:#dfe3ec;"></div>
<div class="t " style="top:659.20px;letter-spacing:-0.202px;left:-212.70px;width:300px;text-align:right;">22,145.00</div>
<div class="r" style="left:136.60px;top:657.90px;width:0.90px;height:12.70px;background:#dfe3ec;"></div>
<div class="t " style="top:659.20px;letter-spacing:-0.204px;left:-165.80px;width:300px;text-align:right;">18.20</div>
<div class="r" style="left:183.50px;top:657.90px;width:0.90px;height:12.70px;background:#dfe3ec;"></div>
<div class="t red" style="top:659.20px;letter-spacing:-0.158px;left:-118.94px;width:300px;text-align:right;">-1,018.19</div>
<div class="r" style="left:230.40px;top:657.90px;width:0.90px;height:12.70px;background:#dfe3ec;"></div>
<div class="t red" style="top:659.20px;letter-spacing:0.011px;left:-72.21px;width:300px;text-align:right;">-4.44%</div>
<div class="r" style="left:277.30px;top:657.90px;width:0.90px;height:12.70px;background:#dfe3ec;"></div>
<div class="t " style="top:659.20px;letter-spacing:-0.198px;left:-25.10px;width:300px;text-align:right;">8.54</div>
<div class="r" style="left:324.20px;top:657.90px;width:0.90px;height:12.70px;background:#dfe3ec;"></div>
<div class="t " style="top:659.20px;letter-spacing:-0.125px;left:21.72px;width:300px;text-align:right;">-0.09</div>
<div class="r" style="left:371.10px;top:657.90px;width:0.90px;height:12.70px;background:#dfe3ec;"></div>
<div class="t " style="top:659.20px;letter-spacing:-0.208px;left:68.71px;width:300px;text-align:right;">248.17</div>
<div class="r" style="left:418.00px;top:657.90px;width:0.90px;height:12.70px;background:#dfe3ec;"></div>
<div class="t " style="top:659.20px;letter-spacing:-0.211px;left:115.61px;width:300px;text-align:right;">1092.91</div>
<div class="r" style="left:464.90px;top:657.90px;width:0.90px;height:12.70px;background:#dfe3ec;"></div>
<div class="t " style="top:659.20px;letter-spacing:-0.198px;left:162.50px;width:300px;text-align:right;">29.1</div>
<svg width="540" height="675" viewBox="0 0 540 675"><rect x="488.6" y="660.2" width="8" height="8" fill="#fff" stroke="#b9c0d0" stroke-width=".8"/><path d="M490.4 664.2l1.900 2.100 3.400-4.300" stroke="#4d5266" stroke-width=".9" fill="none"/></svg>
<div class="r" style="left:524.00px;top:109.60px;width:4.80px;height:562.00px;background:#d3d8e6;border-right:1px solid #bfc6d6;"></div>
<div class="r" style="left:0.00px;top:671.00px;width:1080.00px;height:1.20px;background:#b6bdcf;"></div>
<div class="r" style="left:0.00px;top:672.20px;width:1080.00px;height:3.00px;background:#2b3857;"></div><div class="r" style="left:528.8px;top:109.6px;width:552px;height:35.4px;background:#d9deea;"></div>
<div class="r" style="left:528.8px;top:145px;width:552px;height:509.2px;background:#fff;"></div>
<div class="r" style="left:528.8px;top:128px;width:552px;height:1px;background:#b3bbcc;"></div>
<div class="r" style="left:528.7px;top:110.8px;width:51.5px;height:19px;background:#dce1ec;border:1px solid #b3bbcc;border-bottom:none;"></div>
<div class="t " style="top:112.60px;letter-spacing:-0.367px;left:536.00px;">Risk Chart</div>
<div class="r" style="left:579.2px;top:110.8px;width:55.5px;height:18.2px;background:#d2d8e6;border:1px solid #b3bbcc;"></div>
<div class="t " style="top:112.60px;letter-spacing:-0.319px;left:586.50px;">Price Chart</div>
<div class="r" style="left:633.7px;top:110.8px;width:84.5px;height:18.2px;background:#d2d8e6;border:1px solid #b3bbcc;"></div>
<div class="t " style="top:112.60px;letter-spacing:-0.337px;left:640.50px;">Movement Analysis</div>
<div class="r" style="left:717.2px;top:110.8px;width:46.3px;height:18.2px;background:#d2d8e6;border:1px solid #b3bbcc;"></div>
<div class="t " style="top:112.60px;letter-spacing:-0.343px;left:725.00px;">Volatility</div>
<div class="r" style="left:762.5px;top:110.8px;width:107.7px;height:18.2px;background:#d2d8e6;border:1px solid #b3bbcc;"></div>
<div class="t " style="top:112.60px;letter-spacing:-0.361px;left:769.50px;">Statistics &amp; Fundamentals</div>
<div class="t " style="top:131.00px;letter-spacing:-0.208px;left:533.00px;">Vol Adjust</div>
<div class="r" style="left:574.2px;top:130.5px;width:35px;height:12.8px;background:#fff;border:1px solid #c2c9d8;"></div>
<div class="t " style="top:131.00px;letter-spacing:-0.227px;left:590.60px;">0</div>
<div class="t " style="top:130.60px;letter-spacing:-0.255px;left:1018.90px;">Projection</div>
<div class="r" style="left:1059.4px;top:130.6px;width:30px;height:13px;background:#fff;border:1px solid #c2c9d8;"></div>
<div class="t " style="top:131.10px;letter-spacing:0.009px;left:1062.00px;">18/11/2025</div>
<svg width="1080" height="675" viewBox="0 0 1080 675" style="overflow:hidden">
<path d="M601.4 135.4l2.300-2.700 2.300 2.700zM601.4 138.700l2.300 2.700 2.300-2.700z" fill="#4a4f63"/>
<defs><clipPath id="pc"><rect x="565.8" y="157.5" width="520" height="355.5"/></clipPath></defs>
<path d="M596.3 155.0V516M634.3 155.0V516M672.3 155.0V516M710.3 155.0V516M748.3 155.0V516M786.3 155.0V516M824.3 155.0V516M862.3 155.0V516M900.3 155.0V516M938.3 155.0V516M976.3 155.0V516M1014.3 155.0V516M1052.3 155.0V516M1090.3 155.0V516M565.8 512.7H1080M565.8 487.4H1080M565.8 462.1H1080M565.8 436.8H1080M565.8 411.5H1080M565.8 386.2H1080M565.8 360.9H1080M565.8 335.6H1080M565.8 310.3H1080M565.8 285.0H1080M565.8 259.7H1080M565.8 234.4H1080M565.8 209.1H1080M565.8 183.8H1080M565.8 158.5H1080" stroke="#e3e3e3" stroke-width="1" fill="none"/>
<path d="M565.8 157.5V513.5H1080" stroke="#d0d0d0" stroke-width="1" fill="none"/>
<rect x="786.6" y="157.5" width="185.4" height="355.5" fill="#90cbdb"/>
<rect x="833.0" y="157.5" width="92.7" height="355.5" fill="#4d80be"/>
<path d="M824.3 157.5V513M862.3 157.5V513M900.3 157.5V513M938.3 157.5V513M786.6 512.7H972.0M786.6 487.4H972.0M786.6 462.1H972.0M786.6 436.8H972.0M786.6 411.5H972.0M786.6 386.2H972.0M786.6 360.9H972.0M786.6 335.6H972.0M786.6 310.3H972.0M786.6 285.0H972.0M786.6 259.7H972.0M786.6 234.4H972.0M786.6 209.1H972.0M786.6 183.8H972.0M786.6 158.5H972.0" stroke="#fff" stroke-opacity=".5" stroke-width="1" fill="none"/>
<text x="792" y="173.5" font-size="7.9" fill="#4a86c2" fill-opacity="1" text-anchor="middle" transform="rotate(-90 792 173.5)" dominant-baseline="central">6550.42</text>
<text x="838" y="173.5" font-size="7.9" fill="#8db6de" fill-opacity="1" text-anchor="middle" transform="rotate(-90 838 173.5)" dominant-baseline="central">6611.42</text>
<text x="922.7" y="173.5" font-size="7.9" fill="#a9c9e8" fill-opacity="1" text-anchor="middle" transform="rotate(-90 922.7 173.5)" dominant-baseline="central">6733.40</text>
<text x="968.3" y="173.5" font-size="7.9" fill="#5a9bd2" fill-opacity="1" text-anchor="middle" transform="rotate(-90 968.3 173.5)" dominant-baseline="central">6794.40</text>
<path d="M565.8 335.6H1080" stroke="#2a2a2a" stroke-width="1" fill="none"/>
<path d="M770.3 157.5V513" stroke="#c256c4" stroke-width="1.100" stroke-dasharray="2.800 3" fill="none"/>
<text x="766.9" y="499" font-size="7.4" fill="#a03ca4" fill-opacity="1" text-anchor="middle" transform="rotate(-90 766.9 499)" dominant-baseline="central">6528.99</text>
<path d="M1017.4 157.5V513" stroke="#c256c4" stroke-width="1.100" stroke-dasharray="2.800 3" fill="none"/>
<text x="1014.0" y="499" font-size="7.4" fill="#a03ca4" fill-opacity="1" text-anchor="middle" transform="rotate(-90 1014.0 499)" dominant-baseline="central">6854.12</text>
<path d="M1071.9 157.5V513" stroke="#c256c4" stroke-width="1.100" stroke-dasharray="2.800 3" fill="none"/>
<text x="1068.5" y="499" font-size="7.4" fill="#a03ca4" fill-opacity="1" text-anchor="middle" transform="rotate(-90 1068.5 499)" dominant-baseline="central">6925.80</text>
<text x="667.8" y="508.400" font-size="7.900" fill="#a03ca4" fill-opacity="1" text-anchor="middle">34.6%</text>
<text x="894.2" y="508.400" font-size="7.900" fill="#a03ca4" fill-opacity="0.8" text-anchor="middle">39.6%</text>
<text x="1043.8" y="508.400" font-size="7.900" fill="#a03ca4" fill-opacity="1" text-anchor="middle">6.7%</text>
<g clip-path="url(#pc)" fill="none" stroke-linejoin="round">
<path d="M566.0 434.0L572.8 431.7L579.6 429.5L586.4 427.2L593.1 424.9L599.9 422.7L606.7 420.4L613.5 418.2L620.3 415.9L627.1 413.7L633.9 411.4L640.7 409.1L647.4 406.9L654.2 404.6L661.0 402.3L667.8 400.0L674.6 397.7L681.4 395.5L688.2 393.2L695.0 390.9L701.7 388.7L708.5 386.5L715.3 384.2L722.1 382.0L728.9 379.8L735.7 377.7L742.5 375.6L749.3 373.5L756.0 371.4L762.8 369.4L769.6 367.4L776.4 365.5L783.2 363.6L790.0 361.8L796.8 360.1L803.6 358.4L810.3 356.8L817.1 355.2L823.9 353.8L830.7 352.4" stroke="#ee5c5c" stroke-width="1.050"/>
<path d="M830.7 352.4L835.2 351.5L839.7 350.7L844.2 349.9L848.6 349.2L853.1 348.4L857.6 347.8L862.1 347.2L866.6 346.6L871.1 346.1L875.5 345.6L880.0 345.1L884.5 344.8L889.0 344.4L893.5 344.1L898.0 343.9L902.5 343.7L906.9 343.6L911.4 343.5L915.9 343.5L920.4 343.5L924.9 343.6L929.4 343.7L933.8 343.9L938.3 344.1L942.8 344.4L947.3 344.8L951.8 345.2L956.3 345.7L960.8 346.2L965.2 346.8L969.7 347.4L974.2 348.1L978.7 348.8L983.2 349.6L987.7 350.5L992.1 351.4L996.6 352.4L1001.1 353.4L1005.6 354.4" stroke="#57b95b" stroke-width="1.050"/>
<path d="M1005.6 354.4L1007.6 354.9L1009.7 355.4L1011.7 356.0L1013.7 356.5L1015.8 357.0L1017.8 357.6L1019.9 358.1L1021.9 358.7L1023.9 359.3L1026.0 359.9L1028.0 360.5L1030.0 361.1L1032.1 361.7L1034.1 362.3L1036.1 362.9L1038.2 363.6L1040.2 364.2L1042.2 364.9L1044.3 365.6L1046.3 366.2L1048.4 366.9L1050.4 367.6L1052.4 368.3L1054.5 369.0L1056.5 369.7L1058.5 370.4L1060.6 371.2L1062.6 371.9L1064.6 372.6L1066.7 373.4L1068.7 374.1L1070.7 374.9L1072.8 375.7L1074.8 376.4L1076.9 377.2L1078.9 378.0L1080.9 378.8L1083.0 379.6L1085.0 380.3" stroke="#ee5c5c" stroke-width="1.050"/>
<path d="M566.0 459.0L573.1 456.4L580.1 453.8L587.2 451.1L594.2 448.4L601.3 445.7L608.4 443.0L615.4 440.2L622.5 437.4L629.5 434.6L636.6 431.7L643.6 428.9L650.7 426.0L657.8 423.1L664.8 420.2L671.9 417.3L678.9 414.3L686.0 411.4L693.1 408.5L700.1 405.5L707.2 402.6L714.2 399.7L721.3 396.8L728.4 393.9L735.4 391.0L742.5 388.2L749.5 385.4L756.6 382.6L763.7 379.8L770.7 377.1L777.8 374.4L784.8 371.8L791.9 369.2L798.9 366.7L806.0 364.3L813.1 361.9L820.1 359.5L827.2 357.3L834.2 355.1L841.3 353.0" stroke="#ee5c5c" stroke-width="1.050"/>
<path d="M841.3 353.0L843.5 352.4L845.6 351.8L847.8 351.1L850.0 350.5L852.2 349.9L854.3 349.4L856.5 348.8L858.7 348.2L860.8 347.6L863.0 347.1L865.2 346.5L867.4 346.0L869.5 345.5L871.7 345.0L873.9 344.5L876.0 344.0L878.2 343.5L880.4 343.0L882.6 342.5L884.7 342.1L886.9 341.6L889.1 341.2L891.3 340.8L893.4 340.4L895.6 340.0L897.8 339.6L899.9 339.2L902.1 338.8L904.3 338.5L906.5 338.1L908.6 337.8L910.8 337.4L913.0 337.1L915.1 336.8L917.3 336.5L919.5 336.3L921.7 336.0L923.8 335.7L926.0 335.5" stroke="#86a8ee" stroke-opacity=".5" stroke-width="1.050"/>
<path d="M926.0 335.5L929.9 335.1L933.7 334.7L937.6 334.4L941.5 334.1L945.3 333.9L949.2 333.7L953.0 333.5L956.9 333.4L960.8 333.3L964.6 333.3L968.5 333.3L972.4 333.4L976.2 333.5L980.1 333.6L984.0 333.8L987.8 334.0L991.7 334.3L995.6 334.7L999.4 335.0L1003.3 335.5L1007.1 335.9L1011.0 336.4L1014.9 337.0L1018.7 337.6L1022.6 338.3L1026.5 339.0L1030.3 339.8L1034.2 340.6L1038.1 341.4L1041.9 342.3L1045.8 343.3L1049.7 344.3L1053.5 345.4L1057.4 346.5L1061.2 347.6L1065.1 348.8L1069.0 350.1L1072.8 351.4L1076.7 352.7" stroke="#8fb0f6" stroke-opacity=".9" stroke-width="1.050"/>
<path d="M1076.7 352.7L1076.9 352.8L1077.1 352.9L1077.3 353.0L1077.6 353.1L1077.8 353.1L1078.0 353.2L1078.2 353.3L1078.4 353.4L1078.6 353.4L1078.8 353.5L1079.0 353.6L1079.3 353.7L1079.5 353.8L1079.7 353.8L1079.9 353.9L1080.1 354.0L1080.3 354.1L1080.5 354.1L1080.7 354.2L1081.0 354.3L1081.2 354.4L1081.4 354.5L1081.6 354.5L1081.8 354.6L1082.0 354.7L1082.2 354.8L1082.4 354.9L1082.7 354.9L1082.9 355.0L1083.1 355.1L1083.3 355.2L1083.5 355.3L1083.7 355.3L1083.9 355.4L1084.1 355.5L1084.4 355.6L1084.6 355.7L1084.8 355.8L1085.0 355.8" stroke="#ee5c5c" stroke-width="1.050"/>
<path d="M566.2 485.1L572.2 483.7L578.2 482.1L584.2 480.2L590.1 478.3L596.1 476.1L602.1 473.8L608.1 471.4L614.1 468.8L620.1 466.1L626.0 463.3L632.0 460.3L638.0 457.3L644.0 454.1L650.0 450.9L656.0 447.5L662.0 444.1L667.9 440.6L673.9 436.9L679.9 433.2L685.9 429.4L691.9 425.4L697.9 421.4L703.8 417.3L709.8 413.1L715.8 408.7L721.8 404.3L727.8 399.7L733.8 395.0L739.8 390.3L745.7 385.3L751.7 380.3L757.7 375.1L763.7 369.8L769.7 364.4L775.7 358.8L781.7 353.1L787.6 347.2L793.6 341.2L799.6 335.0L805.6 328.7L811.6 322.2L817.6 315.5L823.5 308.7L829.5 301.7L835.5 294.6L841.5 287.3L847.5 279.8L853.5 272.2L859.5 264.4L865.4 256.4L871.4 248.3L877.4 240.0L883.4 231.6L889.4 223.0L895.4 214.3L901.3 205.5L907.3 196.6L913.3 187.5L919.3 179.0L938.3 180.1L942.2 186.6L946.1 193.3L950.0 199.9L954.0 206.4L957.9 212.8L961.8 219.1L965.7 225.4L969.6 231.6L973.5 237.7L977.4 243.7L981.4 249.6L985.3 255.5L989.2 261.2L993.1 266.9L997.0 272.5L1000.9 278.1L1004.8 283.5L1008.7 288.9L1012.7 294.2L1016.6 299.4L1020.5 304.5L1024.4 309.6L1028.3 314.5L1032.2 319.4L1036.1 324.2L1040.1 329.0L1044.0 333.6L1047.9 338.2L1051.8 342.9L1051.8 342.9L1080.0 280.0L1090.0 257.5" stroke="#4b52d2" stroke-width="1.5"/>
<path d="M566.2 456.1L571.9 454.3L577.5 452.4L583.2 450.4L588.9 448.5L594.5 446.4L600.2 444.4L605.8 442.2L611.5 440.0L617.2 437.7L622.8 435.4L628.5 432.9L634.2 430.4L639.8 427.8L645.5 425.0L651.1 422.2L656.8 419.3L662.5 416.2L668.1 413.1L673.8 409.8L679.5 406.4L685.1 402.9L690.8 399.3L696.4 395.6L702.1 391.7L707.8 387.8L713.4 383.7L719.1 379.5L724.8 375.1L730.4 370.7L736.1 366.1L741.7 361.4L747.4 356.5L753.1 351.6L758.7 346.5L764.4 341.3L770.1 336.0L775.7 330.5L781.4 325.0L787.0 319.3L792.7 313.4L798.4 307.5L804.0 301.4L809.7 295.3L815.4 288.9L821.0 282.5L826.7 275.9L832.3 269.3L838.0 262.4L843.7 255.5L849.3 248.4L855.0 241.2L860.7 233.9L866.3 226.4L872.0 218.8L877.6 211.1L883.3 203.2L889.0 195.2L894.6 187.0L900.3 179.0L919.3 181.8L923.9 189.2L928.4 197.3L933.0 205.3L937.6 213.2L942.1 221.0L946.7 228.7L951.3 236.3L955.9 243.8L960.4 251.2L965.0 258.5L969.6 265.7L974.1 272.8L978.7 279.8L983.3 286.6L987.8 293.4L992.4 300.1L997.0 306.7L1001.5 313.1L1006.1 319.5L1010.7 325.8L1015.2 331.9L1019.8 338.0L1024.4 343.9L1029.0 349.8L1033.5 355.5L1038.1 361.2L1042.7 366.7L1047.2 372.2L1051.8 377.1L1051.8 377.1L1080.0 315.6L1090.0 293.5" stroke="#1f8a22" stroke-width="1.6"/>
</g>
<path d="M844.500 351.400L866 343.400M844.500 354L866 346" stroke="#c9a7a2" stroke-opacity=".9" stroke-width="1.900"/>
<rect x="854.4" y="345.9" width="5.200" height="5.200" rx="1.900" fill="#d60a0a" stroke="#5a1a1a" stroke-width=".6"/>
<text x="561.5" y="515.4" font-size="7.900" fill="#2e2e2e" text-anchor="end">-104%</text>
<text x="561.5" y="490.1" font-size="7.900" fill="#2e2e2e" text-anchor="end">-89%</text>
<text x="561.5" y="464.8" font-size="7.900" fill="#2e2e2e" text-anchor="end">-74%</text>
<text x="561.5" y="439.5" font-size="7.900" fill="#2e2e2e" text-anchor="end">-59%</text>
<text x="561.5" y="414.2" font-size="7.900" fill="#2e2e2e" text-anchor="end">-44%</text>
<text x="561.5" y="388.9" font-size="7.900" fill="#2e2e2e" text-anchor="end">-30%</text>
<text x="561.5" y="363.6" font-size="7.900" fill="#2e2e2e" text-anchor="end">-15%</text>
<text x="561.5" y="338.3" font-size="7.900" fill="#2e2e2e" text-anchor="end">0%</text>
<text x="561.5" y="313.0" font-size="7.900" fill="#2e2e2e" text-anchor="end">15%</text>
<text x="561.5" y="287.7" font-size="7.900" fill="#2e2e2e" text-anchor="end">30%</text>
<text x="561.5" y="262.4" font-size="7.900" fill="#2e2e2e" text-anchor="end">44%</text>
<text x="561.5" y="237.1" font-size="7.900" fill="#2e2e2e" text-anchor="end">59%</text>
<text x="561.5" y="211.8" font-size="7.900" fill="#2e2e2e" text-anchor="end">74%</text>
<text x="561.5" y="186.5" font-size="7.900" fill="#2e2e2e" text-anchor="end">89%</text>
<text x="561.5" y="161.2" font-size="7.900" fill="#2e2e2e" text-anchor="end">104%</text>
<rect x="533.2" y="344" width="29.6" height="9.300" fill="#d40000"/>
<text x="561.5" y="351.500" font-size="7.900" fill="#fff" text-anchor="end">-8%</text>
<text x="596.3" y="154.100" font-size="7.900" fill="#2e2e2e" text-anchor="middle">-5.6%</text>
<text x="596.3" y="524.900" font-size="7.900" fill="#2e2e2e" text-anchor="middle">6300</text>
<text x="634.3" y="154.100" font-size="7.900" fill="#2e2e2e" text-anchor="middle">-4.8%</text>
<text x="634.3" y="524.900" font-size="7.900" fill="#2e2e2e" text-anchor="middle">6350</text>
<text x="672.3" y="154.100" font-size="7.900" fill="#2e2e2e" text-anchor="middle">-4.1%</text>
<text x="672.3" y="524.900" font-size="7.900" fill="#2e2e2e" text-anchor="middle">6400</text>
<text x="710.3" y="154.100" font-size="7.900" fill="#2e2e2e" text-anchor="middle">-3.3%</text>
<text x="710.3" y="524.900" font-size="7.900" fill="#2e2e2e" text-anchor="middle">6450</text>
<text x="748.3" y="154.100" font-size="7.900" fill="#2e2e2e" text-anchor="middle">-2.6%</text>
<text x="748.3" y="524.900" font-size="7.900" fill="#2e2e2e" text-anchor="middle">6500</text>
<text x="786.3" y="154.100" font-size="7.900" fill="#2e2e2e" text-anchor="middle">-1.8%</text>
<text x="786.3" y="524.900" font-size="7.900" fill="#2e2e2e" text-anchor="middle">6550</text>
<text x="824.3" y="154.100" font-size="7.900" fill="#2e2e2e" text-anchor="middle">-1.1%</text>
<text x="824.3" y="524.900" font-size="7.900" fill="#2e2e2e" text-anchor="middle">6600</text>
<text x="862.3" y="154.100" font-size="7.900" fill="#2e2e2e" text-anchor="middle">-0.3%</text>
<text x="900.3" y="154.100" font-size="7.900" fill="#2e2e2e" text-anchor="middle">0.4%</text>
<text x="900.3" y="524.900" font-size="7.900" fill="#2e2e2e" text-anchor="middle">6700</text>
<text x="938.3" y="154.100" font-size="7.900" fill="#2e2e2e" text-anchor="middle">1.2%</text>
<text x="938.3" y="524.900" font-size="7.900" fill="#2e2e2e" text-anchor="middle">6750</text>
<text x="976.3" y="154.100" font-size="7.900" fill="#2e2e2e" text-anchor="middle">1.9%</text>
<text x="976.3" y="524.900" font-size="7.900" fill="#2e2e2e" text-anchor="middle">6800</text>
<text x="1014.3" y="154.100" font-size="7.900" fill="#2e2e2e" text-anchor="middle">2.7%</text>
<text x="1014.3" y="524.900" font-size="7.900" fill="#2e2e2e" text-anchor="middle">6850</text>
<text x="1052.3" y="154.100" font-size="7.900" fill="#2e2e2e" text-anchor="middle">3.4%</text>
<text x="1052.3" y="524.900" font-size="7.900" fill="#2e2e2e" text-anchor="middle">6900</text>
<text x="1090.3" y="154.100" font-size="7.900" fill="#2e2e2e" text-anchor="middle">4.2%</text>
<text x="1090.3" y="524.900" font-size="7.900" fill="#2e2e2e" text-anchor="middle">6950</text>
<rect x="845.3" y="145.400" width="22.2" height="8.900" fill="#fff" stroke="#54648a" stroke-width=".8"/>
<text x="856.6" y="154.100" font-size="7.900" fill="#2e2e2e" text-anchor="middle">-0.4%</text>
<rect x="569.6" y="161.200" width="113" height="93.500" rx="3" fill="#edf1f6" fill-opacity=".93" stroke="#9ba7ba" stroke-width=".9"/>
<rect x="574.800" y="166.9" width="2.300" height="8.400" fill="#e0404c"/>
<text x="577.700" y="173.9" font-size="7.900" fill="#5e5e62">-13,022.70 Realized PnL</text>
<rect x="574.800" y="176.3" width="2.300" height="8.400" fill="#3fae3f"/>
<text x="577.700" y="183.3" font-size="7.900" xml:space="preserve" style="white-space:pre"><tspan fill="#5e5e62">+1</tspan><tspan fill="#5460e6"> 05dic. 6750 Put Δ   -62.73</tspan></text>
<rect x="574.800" y="185.6" width="2.300" height="8.400" fill="#3fae3f"/>
<text x="577.700" y="192.6" font-size="7.900" xml:space="preserve" style="white-space:pre"><tspan fill="#5e5e62">-1</tspan><tspan fill="#ea5a62"> 05dic. 6700 Put Δ   -55.32</tspan></text>
<rect x="574.800" y="195.0" width="2.300" height="8.400" fill="#7b8df2"/>
<text x="577.700" y="202.0" font-size="7.900" xml:space="preserve" style="white-space:pre"><tspan fill="#5e5e62">+2</tspan><tspan fill="#5460e6"> 16ene. 6800 Put Δ   -49.91</tspan></text>
<rect x="574.800" y="204.4" width="2.300" height="8.400" fill="#7b8df2"/>
<text x="577.700" y="211.4" font-size="7.900" xml:space="preserve" style="white-space:pre"><tspan fill="#5e5e62">+2</tspan><tspan fill="#5460e6"> 05dic. 7100 Call Δ       2.20</tspan></text>
<rect x="574.800" y="213.8" width="2.300" height="8.400" fill="#7b8df2"/>
<text x="577.700" y="220.8" font-size="7.900" xml:space="preserve" style="white-space:pre"><tspan fill="#5e5e62">+2</tspan><tspan fill="#5460e6"> 05dic. 6900 Call Δ     14.55</tspan></text>
<rect x="574.800" y="223.1" width="2.300" height="8.400" fill="#7b8df2"/>
<text x="577.700" y="230.1" font-size="7.900" xml:space="preserve" style="white-space:pre"><tspan fill="#5e5e62">-4</tspan><tspan fill="#ea5a62"> 05dic. 7000 Call Δ       6.02</tspan></text>
<rect x="574.800" y="232.5" width="2.300" height="8.400" fill="#7b8df2"/>
<text x="577.700" y="239.5" font-size="7.900" xml:space="preserve" style="white-space:pre"><tspan fill="#5e5e62">-1</tspan><tspan fill="#ea5a62"> 05dic. 6725 Put Δ   -59.11</tspan></text>
<rect x="574.800" y="241.9" width="2.300" height="8.400" fill="#7b8df2"/>
<text x="577.700" y="248.9" font-size="7.900" xml:space="preserve" style="white-space:pre"><tspan fill="#5e5e62">-1</tspan><tspan fill="#ea5a62"> 05dic. 6750 Put Δ   -62.73</tspan></text>
<rect x="569.4" y="482.800" width="62.4" height="27.500" rx="3" fill="#e6f1f6" fill-opacity=".93" stroke="#9ba7ba" stroke-width=".9"/>
<text x="575" y="495.200" font-size="7.900" fill="#5aa55a">05/12/2025 (0)</text>
<text x="575" y="504.100" font-size="7.900" fill="#7fc07f">18/11/2025 (17)</text>
<rect x="531.3" y="527.800" width="560" height="123.700" rx="4" fill="#e8eef7" stroke="#8d99ab" stroke-width=".9"/>
<text x="543" y="549.700" font-size="8.100" fill="#6b6b70">PnL</text>
<text x="596.3" y="539.000" font-size="7.900" fill="#f06a6a" text-anchor="middle">-51%</text>
<text x="596.3" y="546.900" font-size="7.900" fill="#f06a6a" text-anchor="middle">-6924</text>
<text x="634.3" y="539.000" font-size="7.900" fill="#f06a6a" text-anchor="middle">-44%</text>
<text x="634.3" y="546.900" font-size="7.900" fill="#f06a6a" text-anchor="middle">-5920</text>
<text x="672.3" y="539.000" font-size="7.900" fill="#f06a6a" text-anchor="middle">-36%</text>
<text x="672.3" y="546.900" font-size="7.900" fill="#f06a6a" text-anchor="middle">-4901</text>
<text x="710.3" y="539.000" font-size="7.900" fill="#f06a6a" text-anchor="middle">-29%</text>
<text x="710.3" y="546.900" font-size="7.900" fill="#f06a6a" text-anchor="middle">-3906</text>
<text x="748.3" y="539.000" font-size="7.900" fill="#f06a6a" text-anchor="middle">-22%</text>
<text x="748.3" y="546.900" font-size="7.900" fill="#f06a6a" text-anchor="middle">-2976</text>
<text x="786.3" y="539.000" font-size="7.900" fill="#f06a6a" text-anchor="middle">-16%</text>
<text x="786.3" y="546.900" font-size="7.900" fill="#f06a6a" text-anchor="middle">-2149</text>
<text x="824.3" y="539.000" font-size="7.900" fill="#f06a6a" text-anchor="middle">-11%</text>
<text x="824.3" y="546.900" font-size="7.900" fill="#f06a6a" text-anchor="middle">-1466</text>
<text x="900.3" y="539.000" font-size="7.900" fill="#f06a6a" text-anchor="middle">-5%</text>
<text x="900.3" y="546.900" font-size="7.900" fill="#f06a6a" text-anchor="middle">-683</text>
<text x="938.3" y="539.000" font-size="7.900" fill="#f06a6a" text-anchor="middle">-5%</text>
<text x="938.3" y="546.900" font-size="7.900" fill="#f06a6a" text-anchor="middle">-659</text>
<text x="976.3" y="539.000" font-size="7.900" fill="#f06a6a" text-anchor="middle">-7%</text>
<text x="976.3" y="546.900" font-size="7.900" fill="#f06a6a" text-anchor="middle">-932</text>
<text x="1014.3" y="539.000" font-size="7.900" fill="#f06a6a" text-anchor="middle">-11%</text>
<text x="1014.3" y="546.900" font-size="7.900" fill="#f06a6a" text-anchor="middle">-1525</text>
<text x="1052.3" y="539.000" font-size="7.900" fill="#f06a6a" text-anchor="middle">-18%</text>
<text x="1052.3" y="546.900" font-size="7.900" fill="#f06a6a" text-anchor="middle">-2450</text>
<text x="1090.3" y="539.000" font-size="7.900" fill="#f06a6a" text-anchor="middle">-27%</text>
<text x="1090.3" y="546.900" font-size="7.900" fill="#f06a6a" text-anchor="middle">-3600</text>
<path d="M566.5 546.6H1080" stroke="#6a6f7a" stroke-width=".8"/>
<rect x="566.5" y="546.60" width="48.8" height="6.92" fill="#f17474" stroke="#8a6a72" stroke-width=".5"/>
<rect x="615.3" y="546.60" width="38.0" height="5.92" fill="#f17474" stroke="#8a6a72" stroke-width=".5"/>
<rect x="653.3" y="546.60" width="38.0" height="4.90" fill="#f17474" stroke="#8a6a72" stroke-width=".5"/>
<rect x="691.3" y="546.60" width="38.0" height="3.91" fill="#f17474" stroke="#8a6a72" stroke-width=".5"/>
<rect x="729.3" y="546.60" width="38.0" height="2.98" fill="#f17474" stroke="#8a6a72" stroke-width=".5"/>
<rect x="767.3" y="546.60" width="38.0" height="2.15" fill="#f17474" stroke="#8a6a72" stroke-width=".5"/>
<rect x="805.3" y="546.60" width="38.0" height="1.47" fill="#f17474" stroke="#8a6a72" stroke-width=".5"/>
<rect x="843.3" y="546.60" width="38.0" height="1.02" fill="#f17474" stroke="#8a6a72" stroke-width=".5"/>
<rect x="881.3" y="546.60" width="38.0" height="0.68" fill="#f17474" stroke="#8a6a72" stroke-width=".5"/>
<rect x="919.3" y="546.60" width="38.0" height="0.66" fill="#f17474" stroke="#8a6a72" stroke-width=".5"/>
<rect x="957.3" y="546.60" width="38.0" height="0.93" fill="#f17474" stroke="#8a6a72" stroke-width=".5"/>
<rect x="995.3" y="546.60" width="38.0" height="1.53" fill="#f17474" stroke="#8a6a72" stroke-width=".5"/>
<rect x="1033.3" y="546.60" width="38.0" height="2.45" fill="#f17474" stroke="#8a6a72" stroke-width=".5"/>
<rect x="1071.3" y="546.60" width="38.0" height="3.60" fill="#f17474" stroke="#8a6a72" stroke-width=".5"/>
<text x="541" y="577.700" font-size="8.100" fill="#6b6b70">Delta</text>
<path d="M566.5 574.7H1080" stroke="#6a6f7a" stroke-width=".8"/>
<rect x="566.5" y="570.96" width="48.8" height="3.74" fill="#4a6cf0" stroke="#5b6486" stroke-width=".5"/>
<text x="596.3" y="582.2" font-size="7.900" fill="#5a6cf0" text-anchor="middle">19.70</text>
<rect x="615.3" y="570.83" width="38.0" height="3.87" fill="#4a6cf0" stroke="#5b6486" stroke-width=".5"/>
<text x="634.3" y="582.2" font-size="7.900" fill="#5a6cf0" text-anchor="middle">20.35</text>
<rect x="653.3" y="570.85" width="38.0" height="3.85" fill="#4a6cf0" stroke="#5b6486" stroke-width=".5"/>
<text x="672.3" y="582.2" font-size="7.900" fill="#5a6cf0" text-anchor="middle">20.27</text>
<rect x="691.3" y="571.02" width="38.0" height="3.68" fill="#4a6cf0" stroke="#5b6486" stroke-width=".5"/>
<text x="710.3" y="582.2" font-size="7.900" fill="#5a6cf0" text-anchor="middle">19.38</text>
<rect x="729.3" y="571.34" width="38.0" height="3.36" fill="#4a6cf0" stroke="#5b6486" stroke-width=".5"/>
<text x="748.3" y="582.2" font-size="7.900" fill="#5a6cf0" text-anchor="middle">17.70</text>
<rect x="767.3" y="571.81" width="38.0" height="2.89" fill="#4a6cf0" stroke="#5b6486" stroke-width=".5"/>
<text x="786.3" y="582.2" font-size="7.900" fill="#5a6cf0" text-anchor="middle">15.23</text>
<rect x="805.3" y="572.42" width="38.0" height="2.28" fill="#4a6cf0" stroke="#5b6486" stroke-width=".5"/>
<text x="824.3" y="582.2" font-size="7.900" fill="#5a6cf0" text-anchor="middle">11.98</text>
<rect x="843.3" y="573.26" width="38.0" height="1.44" fill="#4a6cf0" stroke="#5b6486" stroke-width=".5"/>
<text x="862.3" y="582.2" font-size="7.900" fill="#5a6cf0" text-anchor="middle" fill-opacity=".35">7.57</text>
<rect x="881.3" y="574.10" width="38.0" height="0.60" fill="#4a6cf0" stroke="#5b6486" stroke-width=".5"/>
<text x="900.3" y="582.2" font-size="7.900" fill="#5a6cf0" text-anchor="middle">3.17</text>
<rect x="919.3" y="574.70" width="38.0" height="0.45" fill="#f17474" stroke="#8a6a72" stroke-width=".5"/>
<text x="938.3" y="573.8000000000001" font-size="7.900" fill="#f06a6a" text-anchor="middle">-2.38</text>
<rect x="957.3" y="574.70" width="38.0" height="1.63" fill="#f17474" stroke="#8a6a72" stroke-width=".5"/>
<text x="976.3" y="573.8000000000001" font-size="7.900" fill="#f06a6a" text-anchor="middle">-8.58</text>
<rect x="995.3" y="574.70" width="38.0" height="2.89" fill="#f17474" stroke="#8a6a72" stroke-width=".5"/>
<text x="1014.3" y="573.8000000000001" font-size="7.900" fill="#f06a6a" text-anchor="middle">-15.19</text>
<rect x="1033.3" y="574.70" width="38.0" height="4.14" fill="#f17474" stroke="#8a6a72" stroke-width=".5"/>
<text x="1052.3" y="573.8000000000001" font-size="7.900" fill="#f06a6a" text-anchor="middle">-21.79</text>
<rect x="1071.3" y="574.70" width="38.0" height="5.22" fill="#f17474" stroke="#8a6a72" stroke-width=".5"/>
<text x="1090.3" y="573.8000000000001" font-size="7.900" fill="#f06a6a" text-anchor="middle">-27.50</text>
<text x="536.300" y="599.300" font-size="8.100" fill="#6b6b70">Gamma</text>
<path d="M566.5 596.2H1080" stroke="#6a6f7a" stroke-width=".8"/>
<rect x="566.5" y="595.20" width="48.8" height="1.00" fill="#4a6cf0" stroke="#5b6486" stroke-width=".5"/>
<text x="596.3" y="603.7" font-size="7.900" fill="#5a6cf0" text-anchor="middle">0.02</text>
<rect x="615.3" y="595.70" width="38.0" height="0.50" fill="#4a6cf0" stroke="#5b6486" stroke-width=".5"/>
<text x="634.3" y="603.7" font-size="7.900" fill="#5a6cf0" text-anchor="middle">0.01</text>
<rect x="653.3" y="596.20" width="38.0" height="0.50" fill="#f17474" stroke="#8a6a72" stroke-width=".5"/>
<text x="672.3" y="594.5" font-size="7.900" fill="#f06a6a" text-anchor="middle">-0.01</text>
<rect x="691.3" y="596.20" width="38.0" height="1.50" fill="#f17474" stroke="#8a6a72" stroke-width=".5"/>
<text x="710.3" y="594.5" font-size="7.900" fill="#f06a6a" text-anchor="middle">-0.03</text>
<rect x="729.3" y="596.20" width="38.0" height="2.00" fill="#f17474" stroke="#8a6a72" stroke-width=".5"/>
<text x="748.3" y="594.5" font-size="7.900" fill="#f06a6a" text-anchor="middle">-0.04</text>
<rect x="767.3" y="596.20" width="38.0" height="3.00" fill="#f17474" stroke="#8a6a72" stroke-width=".5"/>
<text x="786.3" y="594.5" font-size="7.900" fill="#f06a6a" text-anchor="middle">-0.06</text>
<rect x="805.3" y="596.20" width="38.0" height="3.50" fill="#f17474" stroke="#8a6a72" stroke-width=".5"/>
<text x="824.3" y="594.5" font-size="7.900" fill="#f06a6a" text-anchor="middle">-0.07</text>
<rect x="843.3" y="596.20" width="38.0" height="4.50" fill="#f17474" stroke="#8a6a72" stroke-width=".5"/>
<text x="862.3" y="594.5" font-size="7.900" fill="#f06a6a" text-anchor="middle" fill-opacity=".35">-0.09</text>
<rect x="881.3" y="596.20" width="38.0" height="5.00" fill="#f17474" stroke="#8a6a72" stroke-width=".5"/>
<text x="900.3" y="594.5" font-size="7.900" fill="#f06a6a" text-anchor="middle">-0.10</text>
<rect x="919.3" y="596.20" width="38.0" height="6.00" fill="#f17474" stroke="#8a6a72" stroke-width=".5"/>
<text x="938.3" y="594.5" font-size="7.900" fill="#f06a6a" text-anchor="middle">-0.12</text>
<rect x="957.3" y="596.20" width="38.0" height="6.50" fill="#f17474" stroke="#8a6a72" stroke-width=".5"/>
<text x="976.3" y="594.5" font-size="7.900" fill="#f06a6a" text-anchor="middle">-0.13</text>
<rect x="995.3" y="596.20" width="38.0" height="6.50" fill="#f17474" stroke="#8a6a72" stroke-width=".5"/>
<text x="1014.3" y="594.5" font-size="7.900" fill="#f06a6a" text-anchor="middle">-0.13</text>
<rect x="1033.3" y="596.20" width="38.0" height="6.50" fill="#f17474" stroke="#8a6a72" stroke-width=".5"/>
<text x="1052.3" y="594.5" font-size="7.900" fill="#f06a6a" text-anchor="middle">-0.13</text>
<rect x="1071.3" y="596.20" width="38.0" height="6.00" fill="#f17474" stroke="#8a6a72" stroke-width=".5"/>
<text x="1090.3" y="594.5" font-size="7.900" fill="#f06a6a" text-anchor="middle">-0.12</text>
<text x="540.500" y="620.700" font-size="8.100" fill="#6b6b70">Theta</text>
<path d="M566.5 617.6H1080" stroke="#6a6f7a" stroke-width=".8"/>
<rect x="566.5" y="617.60" width="48.8" height="0.09" fill="#f17474" stroke="#8a6a72" stroke-width=".5"/>
<text x="596.3" y="616.3000000000001" font-size="7.900" fill="#f06a6a" text-anchor="middle">-4.59</text>
<rect x="615.3" y="617.01" width="38.0" height="0.59" fill="#4a6cf0" stroke="#5b6486" stroke-width=".5"/>
<text x="634.3" y="625.0" font-size="7.900" fill="#5a6cf0" text-anchor="middle">29.26</text>
<rect x="653.3" y="616.23" width="38.0" height="1.37" fill="#4a6cf0" stroke="#5b6486" stroke-width=".5"/>
<text x="672.3" y="625.0" font-size="7.900" fill="#5a6cf0" text-anchor="middle">68.32</text>
<rect x="691.3" y="615.40" width="38.0" height="2.20" fill="#4a6cf0" stroke="#5b6486" stroke-width=".5"/>
<text x="710.3" y="625.0" font-size="7.900" fill="#5a6cf0" text-anchor="middle">109.81</text>
<rect x="729.3" y="614.58" width="38.0" height="3.02" fill="#4a6cf0" stroke="#5b6486" stroke-width=".5"/>
<text x="748.3" y="625.0" font-size="7.900" fill="#5a6cf0" text-anchor="middle">150.83</text>
<rect x="767.3" y="613.82" width="38.0" height="3.78" fill="#4a6cf0" stroke="#5b6486" stroke-width=".5"/>
<text x="786.3" y="625.0" font-size="7.900" fill="#5a6cf0" text-anchor="middle">189.00</text>
<rect x="805.3" y="613.14" width="38.0" height="4.46" fill="#4a6cf0" stroke="#5b6486" stroke-width=".5"/>
<text x="824.3" y="625.0" font-size="7.900" fill="#5a6cf0" text-anchor="middle">222.83</text>
<rect x="843.3" y="612.57" width="38.0" height="5.03" fill="#4a6cf0" stroke="#5b6486" stroke-width=".5"/>
<text x="862.3" y="625.0" font-size="7.900" fill="#5a6cf0" text-anchor="middle" fill-opacity=".35">251.55</text>
<rect x="881.3" y="612.10" width="38.0" height="5.50" fill="#4a6cf0" stroke="#5b6486" stroke-width=".5"/>
<text x="900.3" y="625.0" font-size="7.900" fill="#5a6cf0" text-anchor="middle">274.87</text>
<rect x="919.3" y="611.77" width="38.0" height="5.83" fill="#4a6cf0" stroke="#5b6486" stroke-width=".5"/>
<text x="938.3" y="625.0" font-size="7.900" fill="#5a6cf0" text-anchor="middle">291.49</text>
<rect x="957.3" y="611.61" width="38.0" height="5.99" fill="#4a6cf0" stroke="#5b6486" stroke-width=".5"/>
<text x="976.3" y="625.0" font-size="7.900" fill="#5a6cf0" text-anchor="middle">299.38</text>
<rect x="995.3" y="611.67" width="38.0" height="5.93" fill="#4a6cf0" stroke="#5b6486" stroke-width=".5"/>
<text x="1014.3" y="625.0" font-size="7.900" fill="#5a6cf0" text-anchor="middle">296.59</text>
<rect x="1033.3" y="612.06" width="38.0" height="5.54" fill="#4a6cf0" stroke="#5b6486" stroke-width=".5"/>
<text x="1052.3" y="625.0" font-size="7.900" fill="#5a6cf0" text-anchor="middle">277.20</text>
<rect x="1071.3" y="612.60" width="38.0" height="5.00" fill="#4a6cf0" stroke="#5b6486" stroke-width=".5"/>
<text x="1090.3" y="625.0" font-size="7.900" fill="#5a6cf0" text-anchor="middle">250.00</text>
<text x="541" y="642.400" font-size="8.100" fill="#6b6b70">Vega</text>
<path d="M566.5 639H1080" stroke="#6a6f7a" stroke-width=".8"/>
<rect x="566.5" y="633.95" width="48.8" height="5.05" fill="#4a6cf0" stroke="#5b6486" stroke-width=".5"/>
<text x="596.3" y="646.4" font-size="7.900" fill="#5a6cf0" text-anchor="middle">917.52</text>
<rect x="615.3" y="633.66" width="38.0" height="5.34" fill="#4a6cf0" stroke="#5b6486" stroke-width=".5"/>
<text x="634.3" y="646.4" font-size="7.900" fill="#5a6cf0" text-anchor="middle">970.21</text>
<rect x="653.3" y="633.43" width="38.0" height="5.57" fill="#4a6cf0" stroke="#5b6486" stroke-width=".5"/>
<text x="672.3" y="646.4" font-size="7.900" fill="#5a6cf0" text-anchor="middle">1012.26</text>
<rect x="691.3" y="633.25" width="38.0" height="5.75" fill="#4a6cf0" stroke="#5b6486" stroke-width=".5"/>
<text x="710.3" y="646.4" font-size="7.900" fill="#5a6cf0" text-anchor="middle">1045.16</text>
<rect x="729.3" y="633.11" width="38.0" height="5.89" fill="#4a6cf0" stroke="#5b6486" stroke-width=".5"/>
<text x="748.3" y="646.4" font-size="7.900" fill="#5a6cf0" text-anchor="middle">1070.12</text>
<rect x="767.3" y="633.02" width="38.0" height="5.98" fill="#4a6cf0" stroke="#5b6486" stroke-width=".5"/>
<text x="786.3" y="646.4" font-size="7.900" fill="#5a6cf0" text-anchor="middle">1087.19</text>
<rect x="805.3" y="632.98" width="38.0" height="6.02" fill="#4a6cf0" stroke="#5b6486" stroke-width=".5"/>
<text x="824.3" y="646.4" font-size="7.900" fill="#5a6cf0" text-anchor="middle">1095.04</text>
<rect x="843.3" y="633.00" width="38.0" height="6.00" fill="#4a6cf0" stroke="#5b6486" stroke-width=".5"/>
<text x="862.3" y="646.4" font-size="7.900" fill="#5a6cf0" text-anchor="middle" fill-opacity=".35">1091.11</text>
<rect x="881.3" y="633.08" width="38.0" height="5.92" fill="#4a6cf0" stroke="#5b6486" stroke-width=".5"/>
<text x="900.3" y="646.4" font-size="7.900" fill="#5a6cf0" text-anchor="middle">1076.76</text>
<rect x="919.3" y="633.21" width="38.0" height="5.79" fill="#4a6cf0" stroke="#5b6486" stroke-width=".5"/>
<text x="938.3" y="646.4" font-size="7.900" fill="#5a6cf0" text-anchor="middle">1052.14</text>
<rect x="957.3" y="633.37" width="38.0" height="5.63" fill="#4a6cf0" stroke="#5b6486" stroke-width=".5"/>
<text x="976.3" y="646.4" font-size="7.900" fill="#5a6cf0" text-anchor="middle">1023.99</text>
<rect x="995.3" y="633.49" width="38.0" height="5.51" fill="#4a6cf0" stroke="#5b6486" stroke-width=".5"/>
<text x="1014.3" y="646.4" font-size="7.900" fill="#5a6cf0" text-anchor="middle">1001.30</text>
<rect x="1033.3" y="633.54" width="38.0" height="5.46" fill="#4a6cf0" stroke="#5b6486" stroke-width=".5"/>
<text x="1052.3" y="646.4" font-size="7.900" fill="#5a6cf0" text-anchor="middle">993.47</text>
<rect x="1071.3" y="633.55" width="38.0" height="5.44" fill="#4a6cf0" stroke="#5b6486" stroke-width=".5"/>
<text x="1090.3" y="646.4" font-size="7.900" fill="#5a6cf0" text-anchor="middle">990.00</text>
<rect x="840.7" y="517" width="33.2" height="133.600" rx="3" fill="#e8eef7" fill-opacity=".82" stroke="#8d99ab" stroke-width=".9"/>
<text x="857.300" y="524.900" font-size="7.900" fill="#2e2e2e" text-anchor="middle">6643.46</text>
<text x="857.300" y="547" font-size="7.900" font-weight="bold" fill="#ee3d44" text-anchor="middle">-1,018</text>
<text x="857.300" y="557.1" font-size="7.900" font-weight="bold" fill="#ee3d44" text-anchor="middle">-7.5%</text>
<text x="857.300" y="578.7" font-size="7.900" font-weight="bold" fill="#3a54ea" text-anchor="middle">8.54</text>
<text x="857.300" y="600.1" font-size="7.900" font-weight="bold" fill="#ee3d44" text-anchor="middle">-0.09</text>
<text x="857.300" y="621.4" font-size="7.900" font-weight="bold" fill="#3a54ea" text-anchor="middle">248.17</text>
<text x="857.300" y="642.9" font-size="7.900" font-weight="bold" fill="#3a54ea" text-anchor="middle">1,092.91</text>
</svg>
<div class="r" style="left:529.2px;top:654.200px;width:552px;height:16.800px;background:#283655;"></div>
<div class="t w" style="top:656.60px;letter-spacing:-0.317px;font-size:9px;left:1062.00px;">260%</div>
<div class="r" style="left:528.3px;top:109.600px;width:1px;height:562px;background:#c3c9d8;"></div>
</body></html>
